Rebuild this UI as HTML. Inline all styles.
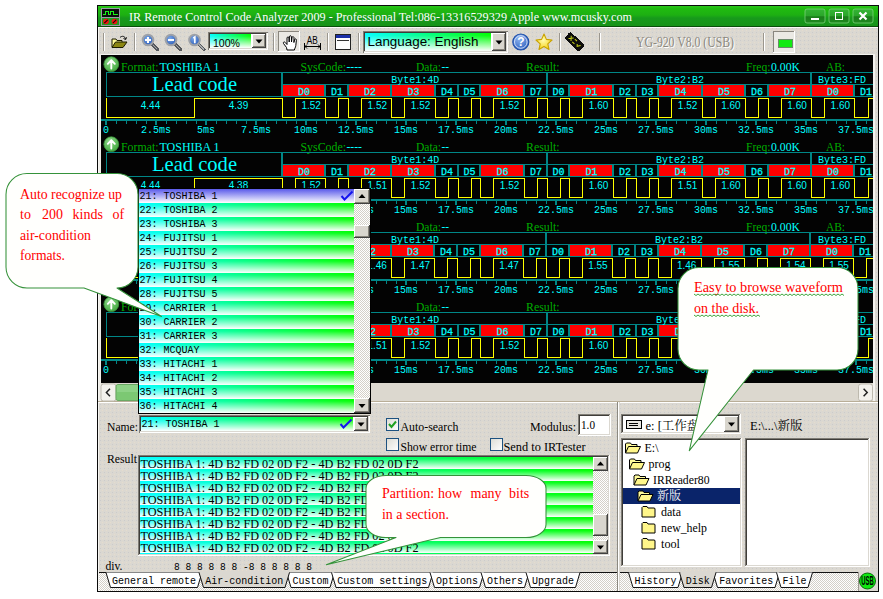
<!DOCTYPE html>
<html lang="en"><head><meta charset="utf-8"><title>IR Remote Control Code Analyzer 2009</title>
<style>
html,body{margin:0;padding:0;background:#ffffff;}
body{width:883px;height:599px;overflow:hidden;position:relative;}
svg{position:absolute;left:0;top:0;display:block;}
text{white-space:pre;}
rect,polyline,line{shape-rendering:crispEdges;}
.tt{font-family:"Liberation Serif","Noto Serif CJK SC",serif;font-size:13.5px;}
.tt14{font-family:"Liberation Serif","Noto Serif CJK SC",serif;font-size:14px;}
.hd{font-family:"Liberation Serif","Noto Serif CJK SC",serif;font-size:13.5px;}
.lead{font-family:"Liberation Serif","Noto Serif CJK SC",serif;font-size:22px;}
.co{font-family:"Liberation Serif","Noto Serif CJK SC",serif;font-size:14px;}
.cj{font-family:"Liberation Serif","Noto Serif CJK SC",serif;font-size:12.5px;}
.m12{font-family:"Liberation Mono","Noto Sans CJK SC",monospace;font-size:11.5px;}
.br{stroke:#00ffff;stroke-width:0.3px;}
.a10{font-family:"Liberation Sans","Noto Sans CJK SC",sans-serif;font-size:10px;}
.a9{font-family:"Liberation Sans","Noto Sans CJK SC",sans-serif;font-size:10px;}
.a12{font-family:"Liberation Sans","Noto Sans CJK SC",sans-serif;font-size:11.5px;}
.a14{font-family:"Liberation Sans","Noto Sans CJK SC",sans-serif;font-size:13.5px;}
.ab12{font-family:"Liberation Sans","Noto Sans CJK SC",sans-serif;font-size:12px;font-weight:bold;}
.usb{font-family:"Liberation Sans","Noto Sans CJK SC",sans-serif;font-size:12px;font-weight:bold;}
</style></head>
<body>
<svg width="883" height="599" viewBox="0 0 883 599">
<defs>
<linearGradient id="gTitle" x1="0" y1="0" x2="0" y2="1"><stop offset="0" stop-color="#2bc81a"/><stop offset="0.12" stop-color="#20bb10"/><stop offset="0.45" stop-color="#1db012"/><stop offset="0.6" stop-color="#179a1c"/><stop offset="1" stop-color="#169318"/></linearGradient>
<linearGradient id="gBtn" x1="0" y1="0" x2="0" y2="1"><stop offset="0" stop-color="#35b535"/><stop offset="0.5" stop-color="#2aa52a"/><stop offset="0.55" stop-color="#1a7d1a"/><stop offset="1" stop-color="#1f8a1f"/></linearGradient>
<linearGradient id="gH" x1="0" y1="0" x2="1" y2="0"><stop offset="0" stop-color="#00ffff"/><stop offset="1" stop-color="#00ff00"/></linearGradient>
<linearGradient id="gV" x1="0" y1="0" x2="0" y2="1"><stop offset="0" stop-color="#ffffff" stop-opacity="0"/><stop offset="0.15" stop-color="#ffffff" stop-opacity="0.05"/><stop offset="1" stop-color="#ffffff" stop-opacity="1"/></linearGradient>
<linearGradient id="gSel" x1="0" y1="0" x2="0" y2="1"><stop offset="0" stop-color="#5a5aea"/><stop offset="1" stop-color="#ffffff"/></linearGradient>
<linearGradient id="gChk" x1="0" y1="0" x2="1" y2="1"><stop offset="0" stop-color="#dcdcd4"/><stop offset="1" stop-color="#ffffff"/></linearGradient>
<radialGradient id="gLens" cx="0.4" cy="0.35" r="0.7"><stop offset="0" stop-color="#7aa6e6"/><stop offset="1" stop-color="#2a5cb8"/></radialGradient>
<radialGradient id="gHelp" cx="0.4" cy="0.3" r="0.8"><stop offset="0" stop-color="#8db4f0"/><stop offset="1" stop-color="#2457b8"/></radialGradient>
<radialGradient id="gStar" cx="0.45" cy="0.4" r="0.6"><stop offset="0" stop-color="#fffbb0"/><stop offset="1" stop-color="#f7d51a"/></radialGradient>
<radialGradient id="gUp" cx="0.4" cy="0.3" r="0.8"><stop offset="0" stop-color="#8ed88a"/><stop offset="1" stop-color="#3da63a"/></radialGradient>
<pattern id="pPanel" width="4" height="4" patternUnits="userSpaceOnUse"><rect width="4" height="4" fill="#dbd8d1"/><rect width="1" height="1" fill="#cbcbcc"/><rect x="2" y="2" width="1" height="1" fill="#e6dccd"/></pattern>
<pattern id="pDither" width="2" height="2" patternUnits="userSpaceOnUse"><rect width="2" height="2" fill="#ffffff"/><rect width="1" height="1" fill="#d4d0c8"/><rect x="1" y="1" width="1" height="1" fill="#d4d0c8"/></pattern>
<clipPath id="cpWave"><rect x="101" y="55" width="772" height="328"/></clipPath>
<clipPath id="cpRes"><rect x="140" y="457" width="453" height="97"/></clipPath>
</defs>
<rect x="97" y="5" width="782" height="587" fill="#0b0b0b" />
<rect x="98" y="6" width="780" height="585" fill="url(#pPanel)" />
<rect x="98" y="27" width="1" height="564" fill="#f6f5f1" />
<rect x="98" y="6" width="780" height="20" fill="url(#gTitle)" />
<rect x="98" y="26" width="780" height="1" fill="#0b4d0b" />
<rect x="98" y="27" width="780" height="1" fill="#fbfaf8" />
<rect x="101" y="8" width="19" height="18" fill="#9a9aa6" />
<rect x="102" y="9" width="17" height="8" fill="#0c0c0c" />
<rect x="102" y="18" width="17" height="7" fill="#1f9a1f" />
<polyline points="103,14.5 105.5,14.5 105.5,11.5 108.5,11.5 108.5,14.5 110.5,14.5 110.5,11.5 113.5,11.5 113.5,14.5 118,14.5" fill="none" stroke="#19f019" stroke-width="1.3"/>
<circle cx="106" cy="21.5" r="2.8" fill="#f01414"/><circle cx="114.5" cy="21.5" r="2.8" fill="#f01414"/>
<line x1="104.3" y1="23.2" x2="107.7" y2="19.8" stroke="#200" stroke-width="1.1" style="shape-rendering:auto"/>
<line x1="112.8" y1="23.2" x2="116.2" y2="19.8" stroke="#200" stroke-width="1.1" style="shape-rendering:auto"/>
<text x="129" y="21" class="tt" fill="#ffffff" textLength="503" lengthAdjust="spacingAndGlyphs" >IR Remote Control Code Analyzer 2009 - Professional Tel:086-13316529329 Apple www.mcusky.com</text>
<rect x="805" y="9" width="20" height="14" fill="url(#gBtn)" rx="2" stroke="#7fd47f" stroke-opacity="0.75" stroke-width="1" style="shape-rendering:auto"/>
<rect x="829" y="9" width="20" height="14" fill="url(#gBtn)" rx="2" stroke="#7fd47f" stroke-opacity="0.75" stroke-width="1" style="shape-rendering:auto"/>
<rect x="853" y="9" width="20" height="14" fill="url(#gBtn)" rx="2" stroke="#7fd47f" stroke-opacity="0.75" stroke-width="1" style="shape-rendering:auto"/>
<rect x="811" y="18" width="8" height="2" fill="#ffffff" />
<rect x="835.5" y="12.5" width="7" height="7" fill="none" stroke="#fff" stroke-width="1.6"/>
<path d="M859.5 12.5 L866.5 19.5 M866.5 12.5 L859.5 19.5" stroke="#fff" stroke-width="2.2" fill="none"/>
<rect x="103" y="33" width="1" height="18" fill="#9a968e" />
<rect x="104" y="33" width="1" height="18" fill="#ffffff" />
<rect x="134" y="33" width="1" height="18" fill="#9a968e" />
<rect x="135" y="33" width="1" height="18" fill="#ffffff" />
<rect x="273" y="33" width="1" height="18" fill="#9a968e" />
<rect x="274" y="33" width="1" height="18" fill="#ffffff" />
<rect x="327" y="33" width="1" height="18" fill="#9a968e" />
<rect x="328" y="33" width="1" height="18" fill="#ffffff" />
<rect x="358" y="33" width="1" height="18" fill="#9a968e" />
<rect x="359" y="33" width="1" height="18" fill="#ffffff" />
<rect x="559" y="33" width="1" height="18" fill="#9a968e" />
<rect x="560" y="33" width="1" height="18" fill="#ffffff" />
<rect x="599" y="33" width="1" height="18" fill="#9a968e" />
<rect x="600" y="33" width="1" height="18" fill="#ffffff" />
<rect x="763" y="33" width="1" height="18" fill="#9a968e" />
<rect x="764" y="33" width="1" height="18" fill="#ffffff" />
<g transform="translate(111,35)"><path d="M1 12 L1 4 L5 4 L6 5.5 L11 5.5 L11 7" fill="#fffb9a" stroke="#1a1a00" stroke-width="1"/><path d="M1 12.5 L4.5 7 L16 7 L12 12.5 Z" fill="#8b8612" stroke="#1a1a00" stroke-width="1"/><path d="M9 2.5 C11 0.5 14 1 14.5 4 M12.5 3.5 L14.7 4.6 L15.6 2.3" fill="none" stroke="#111" stroke-width="1"/></g>
<g><line x1="152" y1="44" x2="157.5" y2="49.5" stroke="#55585c" stroke-width="3.2" stroke-linecap="round"/><line x1="153" y1="45" x2="157" y2="49" stroke="#a6a9ad" stroke-width="1.2" stroke-linecap="round"/><circle cx="148" cy="40" r="5.3" fill="url(#gLens)" stroke="#9da1a8" stroke-width="2"/>
<path d="M145 40 H151 M148 37 V43" stroke="#fff" stroke-width="2"/>
</g>
<g><line x1="175" y1="44" x2="180.5" y2="49.5" stroke="#55585c" stroke-width="3.2" stroke-linecap="round"/><line x1="176" y1="45" x2="180" y2="49" stroke="#a6a9ad" stroke-width="1.2" stroke-linecap="round"/><circle cx="171" cy="40" r="5.3" fill="url(#gLens)" stroke="#9da1a8" stroke-width="2"/>
<path d="M168 40 H174" stroke="#fff" stroke-width="2"/>
</g>
<g><line x1="198.5" y1="44" x2="204.0" y2="49.5" stroke="#55585c" stroke-width="3.2" stroke-linecap="round"/><line x1="199.5" y1="45" x2="203.5" y2="49" stroke="#a6a9ad" stroke-width="1.2" stroke-linecap="round"/><circle cx="194.5" cy="40" r="5.3" fill="url(#gLens)" stroke="#9da1a8" stroke-width="2"/>
<path d="M193.3 38 L194.8 37 V43.2" stroke="#fff" stroke-width="1.7" fill="none"/>
</g>
<rect x="208" y="32" width="60" height="18" fill="#ffffff" />
<rect x="208" y="32" width="60" height="1" fill="#7f7c75" />
<rect x="208" y="32" width="1" height="18" fill="#7f7c75" />
<rect x="209" y="33" width="58" height="1" fill="#3f3d39" />
<rect x="209" y="33" width="1" height="16" fill="#3f3d39" />
<rect x="209" y="48" width="58" height="1" fill="#dbd8d1" />
<rect x="266" y="33" width="1" height="16" fill="#dbd8d1" />
<rect x="210" y="34" width="41" height="14" fill="url(#gH)" />
<rect x="210" y="34" width="41" height="14" fill="url(#gV)" />
<rect x="252" y="34" width="14" height="14" fill="#d9d6ce" />
<rect x="252" y="34" width="14" height="1" fill="#ffffff" />
<rect x="252" y="34" width="1" height="14" fill="#ffffff" />
<rect x="252" y="47" width="14" height="1" fill="#404040" />
<rect x="265" y="34" width="1" height="14" fill="#404040" />
<rect x="253" y="46" width="12" height="1" fill="#858279" />
<rect x="264" y="35" width="1" height="12" fill="#858279" />
<path d="M255.5 39.5 L262.5 39.5 L259 43.5 Z" fill="#000"/>
<text x="213" y="47" class="a12" fill="#000" textLength="27" lengthAdjust="spacingAndGlyphs" >100%</text>
<rect x="278" y="31" width="22" height="21" fill="#ebe9e4" />
<rect x="278" y="31" width="22" height="1" fill="#8a867e" />
<rect x="278" y="31" width="1" height="21" fill="#8a867e" />
<rect x="278" y="51" width="22" height="1" fill="#fff" />
<rect x="299" y="31" width="1" height="21" fill="#fff" />
<g transform="translate(282,35)"><path d="M5 15 L4.5 12.5 L1.5 8.5 C0.8 7.3 2.3 6.3 3.3 7.5 L5 9.5 L5 3 C5 1.6 7 1.6 7 3 L7.2 7 L7.4 1.8 C7.4 0.4 9.4 0.4 9.4 1.8 L9.5 7 L10 2.6 C10.1 1.2 12 1.4 12 2.8 L11.9 7.5 L12.6 4.6 C13 3.4 14.6 3.8 14.4 5.2 L13.8 10.5 C13.6 12.5 12.6 13.4 12.4 15 Z" fill="#fff" stroke="#000" stroke-width="1"/></g>
<text x="306.8" y="44.3" class="a9" fill="#000" textLength="11" lengthAdjust="spacingAndGlyphs" >AB</text>
<path d="M304.5 43 V50 M320.5 43 V50 M304.5 46.5 H320.5 M307 44.5 L305 46.5 L307 48.5 M318 44.5 L320 46.5 L318 48.5" stroke="#000" stroke-width="1" fill="none"/>
<rect x="335.5" y="34.5" width="15" height="14.5" fill="#fdfdfd" stroke="#222" stroke-width="1"/>
<rect x="336" y="35" width="14" height="3" fill="#1b2fa8" />
<rect x="337" y="40" width="12" height="1" fill="#333" />
<rect x="363" y="31" width="145" height="22" fill="#ffffff" />
<rect x="363" y="31" width="145" height="1" fill="#7f7c75" />
<rect x="363" y="31" width="1" height="22" fill="#7f7c75" />
<rect x="364" y="32" width="143" height="1" fill="#3f3d39" />
<rect x="364" y="32" width="1" height="20" fill="#3f3d39" />
<rect x="364" y="51" width="143" height="1" fill="#dbd8d1" />
<rect x="506" y="32" width="1" height="20" fill="#dbd8d1" />
<rect x="365" y="33" width="126" height="18" fill="url(#gH)" />
<rect x="365" y="33" width="126" height="18" fill="url(#gV)" />
<rect x="492" y="33" width="14" height="18" fill="#d9d6ce" />
<rect x="492" y="33" width="14" height="1" fill="#ffffff" />
<rect x="492" y="33" width="1" height="18" fill="#ffffff" />
<rect x="492" y="50" width="14" height="1" fill="#404040" />
<rect x="505" y="33" width="1" height="18" fill="#404040" />
<rect x="493" y="49" width="12" height="1" fill="#858279" />
<rect x="504" y="34" width="1" height="16" fill="#858279" />
<path d="M495.5 40.5 L502.5 40.5 L499 44.5 Z" fill="#000"/>
<text x="367.5" y="45.5" class="a14" fill="#000" textLength="111" lengthAdjust="spacingAndGlyphs" >Language: English</text>
<circle cx="520.8" cy="42" r="8" fill="url(#gHelp)" stroke="#1f4fa8" stroke-width="1.2"/><circle cx="520.8" cy="42" r="6.3" fill="none" stroke="#dfe9fb" stroke-width="0.9"/>
<text x="520.8" y="46.2" class="ab12" fill="#fff" text-anchor="middle" >?</text>
<path d="M544 34 L546.4 39.4 L552 40 L547.8 43.8 L549 49.4 L544 46.5 L539 49.4 L540.2 43.8 L536 40 L541.6 39.4 Z" fill="url(#gStar)" stroke="#c9a200" stroke-width="1.1" stroke-linejoin="round"/>
<g transform="rotate(43 574.5 41.7)"><rect x="564.5" y="37.2" width="20" height="9" rx="2" fill="#0c0c0c"/><path d="M568 39.5 l3.4 4 M571.4 39.5 l-3.4 4 M573 39.6 h3 M573 43.4 h3 M578 41.5 l1.6 1.8 l2 -3" stroke="#c7d11a" stroke-width="1" fill="none"/></g>
<text x="637" y="48" class="tt14" fill="#ffffff" textLength="98" lengthAdjust="spacingAndGlyphs" >YG-920 V8.0 (USB)</text>
<text x="636" y="47" class="tt14" fill="#8b887f" textLength="98" lengthAdjust="spacingAndGlyphs" >YG-920 V8.0 (USB)</text>
<rect x="773" y="31" width="22" height="22" fill="#ebe9e4" />
<rect x="773" y="31" width="22" height="1" fill="#8a867e" />
<rect x="773" y="31" width="1" height="22" fill="#8a867e" />
<rect x="773" y="52" width="22" height="1" fill="#fff" />
<rect x="794" y="31" width="1" height="22" fill="#fff" />
<rect x="778" y="39" width="14" height="8" fill="#12ea12" stroke="#6a8a6a" stroke-width="1"/>
<rect x="873" y="54" width="2" height="347" fill="#f4f3ef" />
<rect x="99" y="54" width="776" height="1" fill="#f4f3ef" />
<rect x="99" y="54" width="2" height="347" fill="#eeece7" />
<rect x="101" y="55" width="772" height="328" fill="#030303" />
<g clip-path="url(#cpWave)">
<circle cx="111.3" cy="64.2" r="7.4" fill="url(#gUp)" stroke="#3c9a3c" stroke-width="0.8"/>
<path d="M111.3 68.6 V60.6 M107.8 63.8 L111.3 60.2 L114.8 63.8" stroke="#fff" stroke-width="1.9" fill="none" stroke-linecap="round" stroke-linejoin="round"/>
<text x="121" y="71" class="hd" fill="#00ad00" textLength="37.5" lengthAdjust="spacingAndGlyphs" >Format:</text>
<text x="159.5" y="71" class="hd" fill="#00ffff" textLength="60" lengthAdjust="spacingAndGlyphs" >TOSHIBA 1</text>
<text x="300.5" y="71" class="hd" fill="#00ad00" textLength="45.5" lengthAdjust="spacingAndGlyphs" >SysCode:</text>
<text x="346.5" y="71" class="hd" fill="#00ffff" textLength="15.5" lengthAdjust="spacingAndGlyphs" >----</text>
<text x="416" y="71" class="hd" fill="#00ad00" textLength="25" lengthAdjust="spacingAndGlyphs" >Data:</text>
<text x="441.5" y="71" class="hd" fill="#00ffff" textLength="7.5" lengthAdjust="spacingAndGlyphs" >--</text>
<text x="526" y="71" class="hd" fill="#00ad00" textLength="33.5" lengthAdjust="spacingAndGlyphs" >Result:</text>
<text x="746" y="71" class="hd" fill="#00ad00" textLength="24.5" lengthAdjust="spacingAndGlyphs" >Freq:</text>
<text x="771" y="71" class="hd" fill="#00ffff" textLength="29" lengthAdjust="spacingAndGlyphs" >0.00K</text>
<text x="826" y="71" class="hd" fill="#00ad00" textLength="19" lengthAdjust="spacingAndGlyphs" >AB:</text>
<rect x="106" y="72" width="767" height="1" fill="#008686" />
<rect x="106" y="96" width="767" height="1" fill="#008686" />
<rect x="106" y="72" width="1" height="25" fill="#008686" />
<rect x="281" y="72" width="2" height="25" fill="#008686" />
<rect x="283" y="84" width="590" height="1" fill="#008686" />
<text x="194.5" y="91" class="lead" fill="#00ffff" textLength="85" lengthAdjust="spacingAndGlyphs" text-anchor="middle" >Lead code</text>
<rect x="283" y="85" width="41" height="11" fill="#ff0000" />
<rect x="324" y="85" width="2" height="11" fill="#008686" />
<text x="304" y="95" class="m12 br" fill="#00ffff" textLength="12" lengthAdjust="spacingAndGlyphs" text-anchor="middle" >D0</text>
<rect x="347" y="85" width="2" height="11" fill="#008686" />
<text x="337" y="95" class="m12 br" fill="#00ffff" textLength="12" lengthAdjust="spacingAndGlyphs" text-anchor="middle" >D1</text>
<rect x="349" y="85" width="41" height="11" fill="#ff0000" />
<rect x="390" y="85" width="2" height="11" fill="#008686" />
<text x="370" y="95" class="m12 br" fill="#00ffff" textLength="12" lengthAdjust="spacingAndGlyphs" text-anchor="middle" >D2</text>
<rect x="392" y="85" width="42" height="11" fill="#ff0000" />
<rect x="434" y="85" width="2" height="11" fill="#008686" />
<text x="413.5" y="95" class="m12 br" fill="#00ffff" textLength="12" lengthAdjust="spacingAndGlyphs" text-anchor="middle" >D3</text>
<rect x="457" y="85" width="2" height="11" fill="#008686" />
<text x="447" y="95" class="m12 br" fill="#00ffff" textLength="12" lengthAdjust="spacingAndGlyphs" text-anchor="middle" >D4</text>
<rect x="479" y="85" width="2" height="11" fill="#008686" />
<text x="469.5" y="95" class="m12 br" fill="#00ffff" textLength="12" lengthAdjust="spacingAndGlyphs" text-anchor="middle" >D5</text>
<rect x="481" y="85" width="42" height="11" fill="#ff0000" />
<rect x="523" y="85" width="2" height="11" fill="#008686" />
<text x="502.5" y="95" class="m12 br" fill="#00ffff" textLength="12" lengthAdjust="spacingAndGlyphs" text-anchor="middle" >D6</text>
<rect x="546" y="85" width="2" height="11" fill="#008686" />
<text x="536" y="95" class="m12 br" fill="#00ffff" textLength="12" lengthAdjust="spacingAndGlyphs" text-anchor="middle" >D7</text>
<rect x="546" y="72" width="2" height="25" fill="#008686" />
<text x="415.3" y="83" class="m12" fill="#00ffff" textLength="48" lengthAdjust="spacingAndGlyphs" text-anchor="middle" >Byte1:4D</text>
<rect x="568" y="85" width="2" height="11" fill="#008686" />
<text x="558.5" y="95" class="m12 br" fill="#00ffff" textLength="12" lengthAdjust="spacingAndGlyphs" text-anchor="middle" >D0</text>
<rect x="570" y="85" width="42" height="11" fill="#ff0000" />
<rect x="612" y="85" width="2" height="11" fill="#008686" />
<text x="591.5" y="95" class="m12 br" fill="#00ffff" textLength="12" lengthAdjust="spacingAndGlyphs" text-anchor="middle" >D1</text>
<rect x="635" y="85" width="2" height="11" fill="#008686" />
<text x="625" y="95" class="m12 br" fill="#00ffff" textLength="12" lengthAdjust="spacingAndGlyphs" text-anchor="middle" >D2</text>
<rect x="657" y="85" width="2" height="11" fill="#008686" />
<text x="647.5" y="95" class="m12 br" fill="#00ffff" textLength="12" lengthAdjust="spacingAndGlyphs" text-anchor="middle" >D3</text>
<rect x="659" y="85" width="42" height="11" fill="#ff0000" />
<rect x="701" y="85" width="2" height="11" fill="#008686" />
<text x="680.5" y="95" class="m12 br" fill="#00ffff" textLength="12" lengthAdjust="spacingAndGlyphs" text-anchor="middle" >D4</text>
<rect x="703" y="85" width="41" height="11" fill="#ff0000" />
<rect x="744" y="85" width="2" height="11" fill="#008686" />
<text x="724" y="95" class="m12 br" fill="#00ffff" textLength="12" lengthAdjust="spacingAndGlyphs" text-anchor="middle" >D5</text>
<rect x="767" y="85" width="2" height="11" fill="#008686" />
<text x="757" y="95" class="m12 br" fill="#00ffff" textLength="12" lengthAdjust="spacingAndGlyphs" text-anchor="middle" >D6</text>
<rect x="769" y="85" width="41" height="11" fill="#ff0000" />
<rect x="810" y="85" width="2" height="11" fill="#008686" />
<text x="790" y="95" class="m12 br" fill="#00ffff" textLength="12" lengthAdjust="spacingAndGlyphs" text-anchor="middle" >D7</text>
<rect x="810" y="72" width="2" height="25" fill="#008686" />
<text x="679.9" y="83" class="m12" fill="#00ffff" textLength="48" lengthAdjust="spacingAndGlyphs" text-anchor="middle" >Byte2:B2</text>
<rect x="812" y="85" width="41" height="11" fill="#ff0000" />
<rect x="853" y="85" width="2" height="11" fill="#008686" />
<text x="833" y="95" class="m12 br" fill="#00ffff" textLength="12" lengthAdjust="spacingAndGlyphs" text-anchor="middle" >D0</text>
<rect x="876" y="85" width="2" height="11" fill="#008686" />
<text x="866" y="95" class="m12 br" fill="#00ffff" textLength="12" lengthAdjust="spacingAndGlyphs" text-anchor="middle" >D1</text>
<rect x="878" y="85" width="42" height="11" fill="#ff0000" />
<rect x="920" y="85" width="2" height="11" fill="#008686" />
<text x="899.5" y="95" class="m12 br" fill="#00ffff" textLength="12" lengthAdjust="spacingAndGlyphs" text-anchor="middle" >D2</text>
<rect x="920" y="72" width="2" height="25" fill="#008686" />
<text x="818" y="83" class="m12" fill="#00ffff" textLength="48" lengthAdjust="spacingAndGlyphs" >Byte3:FD</text>
<polyline points="106.5,98 106.5,117.5 194.5,117.5 194.5,98.5 282.5,98.5 282.5,117.5 295.5,117.5 295.5,98.5 325.5,98.5 325.5,117.5 338.5,117.5 338.5,98.5 348.5,98.5 348.5,117.5 361.5,117.5 361.5,98.5 391.5,98.5 391.5,117.5 404.5,117.5 404.5,98.5 435.5,98.5 435.5,117.5 448.5,117.5 448.5,98.5 458.5,98.5 458.5,117.5 471.5,117.5 471.5,98.5 480.5,98.5 480.5,117.5 493.5,117.5 493.5,98.5 524.5,98.5 524.5,117.5 537.5,117.5 537.5,98.5 547.5,98.5 547.5,117.5 560.5,117.5 560.5,98.5 569.5,98.5 569.5,117.5 582.5,117.5 582.5,98.5 613.5,98.5 613.5,117.5 626.5,117.5 626.5,98.5 636.5,98.5 636.5,117.5 649.5,117.5 649.5,98.5 658.5,98.5 658.5,117.5 671.5,117.5 671.5,98.5 702.5,98.5 702.5,117.5 715.5,117.5 715.5,98.5 745.5,98.5 745.5,117.5 758.5,117.5 758.5,98.5 768.5,98.5 768.5,117.5 781.5,117.5 781.5,98.5 811.5,98.5 811.5,117.5 824.5,117.5 824.5,98.5 854.5,98.5 854.5,117.5 868.5,117.5 868.5,98.5 877.5,98.5 877.5,117.5 890.5,117.5 890.5,98.5 921.5,98.5" fill="none" stroke="#ffff00" stroke-width="1"/>
<text x="150.5" y="109" class="a10" fill="#00ffff" text-anchor="middle" >4.44</text>
<text x="238.5" y="109" class="a10" fill="#00ffff" text-anchor="middle" >4.39</text>
<text x="311.15" y="109" class="a10" fill="#00ffff" text-anchor="middle" >1.52</text>
<text x="377.3" y="109" class="a10" fill="#00ffff" text-anchor="middle" >1.52</text>
<text x="420.6" y="109" class="a10" fill="#00ffff" text-anchor="middle" >1.52</text>
<text x="509.6" y="109" class="a10" fill="#00ffff" text-anchor="middle" >1.52</text>
<text x="598.6" y="109" class="a10" fill="#00ffff" text-anchor="middle" >1.60</text>
<text x="687.6" y="109" class="a10" fill="#00ffff" text-anchor="middle" >1.52</text>
<text x="730.9" y="109" class="a10" fill="#00ffff" text-anchor="middle" >1.60</text>
<text x="797.05" y="109" class="a10" fill="#00ffff" text-anchor="middle" >1.60</text>
<text x="840.35" y="109" class="a10" fill="#00ffff" text-anchor="middle" >1.60</text>
<rect x="101" y="119" width="772" height="2" fill="#008686" />
<rect x="105" y="121" width="2" height="4" fill="#008686" />
<rect x="116" y="121" width="1" height="3" fill="#008686" />
<rect x="126" y="121" width="1" height="3" fill="#008686" />
<rect x="136" y="121" width="1" height="3" fill="#008686" />
<rect x="146" y="121" width="1" height="3" fill="#008686" />
<rect x="155" y="121" width="2" height="4" fill="#008686" />
<rect x="166" y="121" width="1" height="3" fill="#008686" />
<rect x="176" y="121" width="1" height="3" fill="#008686" />
<rect x="186" y="121" width="1" height="3" fill="#008686" />
<rect x="196" y="121" width="1" height="3" fill="#008686" />
<rect x="205" y="121" width="2" height="4" fill="#008686" />
<rect x="216" y="121" width="1" height="3" fill="#008686" />
<rect x="226" y="121" width="1" height="3" fill="#008686" />
<rect x="236" y="121" width="1" height="3" fill="#008686" />
<rect x="246" y="121" width="1" height="3" fill="#008686" />
<rect x="255" y="121" width="2" height="4" fill="#008686" />
<rect x="266" y="121" width="1" height="3" fill="#008686" />
<rect x="276" y="121" width="1" height="3" fill="#008686" />
<rect x="286" y="121" width="1" height="3" fill="#008686" />
<rect x="296" y="121" width="1" height="3" fill="#008686" />
<rect x="305" y="121" width="2" height="4" fill="#008686" />
<rect x="316" y="121" width="1" height="3" fill="#008686" />
<rect x="326" y="121" width="1" height="3" fill="#008686" />
<rect x="336" y="121" width="1" height="3" fill="#008686" />
<rect x="346" y="121" width="1" height="3" fill="#008686" />
<rect x="355" y="121" width="2" height="4" fill="#008686" />
<rect x="366" y="121" width="1" height="3" fill="#008686" />
<rect x="376" y="121" width="1" height="3" fill="#008686" />
<rect x="386" y="121" width="1" height="3" fill="#008686" />
<rect x="396" y="121" width="1" height="3" fill="#008686" />
<rect x="405" y="121" width="2" height="4" fill="#008686" />
<rect x="416" y="121" width="1" height="3" fill="#008686" />
<rect x="426" y="121" width="1" height="3" fill="#008686" />
<rect x="436" y="121" width="1" height="3" fill="#008686" />
<rect x="446" y="121" width="1" height="3" fill="#008686" />
<rect x="455" y="121" width="2" height="4" fill="#008686" />
<rect x="466" y="121" width="1" height="3" fill="#008686" />
<rect x="476" y="121" width="1" height="3" fill="#008686" />
<rect x="486" y="121" width="1" height="3" fill="#008686" />
<rect x="496" y="121" width="1" height="3" fill="#008686" />
<rect x="505" y="121" width="2" height="4" fill="#008686" />
<rect x="516" y="121" width="1" height="3" fill="#008686" />
<rect x="526" y="121" width="1" height="3" fill="#008686" />
<rect x="536" y="121" width="1" height="3" fill="#008686" />
<rect x="546" y="121" width="1" height="3" fill="#008686" />
<rect x="555" y="121" width="2" height="4" fill="#008686" />
<rect x="566" y="121" width="1" height="3" fill="#008686" />
<rect x="576" y="121" width="1" height="3" fill="#008686" />
<rect x="586" y="121" width="1" height="3" fill="#008686" />
<rect x="596" y="121" width="1" height="3" fill="#008686" />
<rect x="605" y="121" width="2" height="4" fill="#008686" />
<rect x="616" y="121" width="1" height="3" fill="#008686" />
<rect x="626" y="121" width="1" height="3" fill="#008686" />
<rect x="636" y="121" width="1" height="3" fill="#008686" />
<rect x="646" y="121" width="1" height="3" fill="#008686" />
<rect x="655" y="121" width="2" height="4" fill="#008686" />
<rect x="666" y="121" width="1" height="3" fill="#008686" />
<rect x="676" y="121" width="1" height="3" fill="#008686" />
<rect x="686" y="121" width="1" height="3" fill="#008686" />
<rect x="696" y="121" width="1" height="3" fill="#008686" />
<rect x="705" y="121" width="2" height="4" fill="#008686" />
<rect x="716" y="121" width="1" height="3" fill="#008686" />
<rect x="726" y="121" width="1" height="3" fill="#008686" />
<rect x="736" y="121" width="1" height="3" fill="#008686" />
<rect x="746" y="121" width="1" height="3" fill="#008686" />
<rect x="755" y="121" width="2" height="4" fill="#008686" />
<rect x="766" y="121" width="1" height="3" fill="#008686" />
<rect x="776" y="121" width="1" height="3" fill="#008686" />
<rect x="786" y="121" width="1" height="3" fill="#008686" />
<rect x="796" y="121" width="1" height="3" fill="#008686" />
<rect x="805" y="121" width="2" height="4" fill="#008686" />
<rect x="816" y="121" width="1" height="3" fill="#008686" />
<rect x="826" y="121" width="1" height="3" fill="#008686" />
<rect x="836" y="121" width="1" height="3" fill="#008686" />
<rect x="846" y="121" width="1" height="3" fill="#008686" />
<rect x="855" y="121" width="2" height="4" fill="#008686" />
<rect x="866" y="121" width="1" height="3" fill="#008686" />
<text x="106" y="133" class="m12" fill="#00ffff" textLength="6" lengthAdjust="spacingAndGlyphs" text-anchor="middle" >0</text>
<text x="156" y="133" class="m12" fill="#00ffff" textLength="30" lengthAdjust="spacingAndGlyphs" text-anchor="middle" >2.5ms</text>
<text x="206" y="133" class="m12" fill="#00ffff" textLength="18" lengthAdjust="spacingAndGlyphs" text-anchor="middle" >5ms</text>
<text x="256" y="133" class="m12" fill="#00ffff" textLength="30" lengthAdjust="spacingAndGlyphs" text-anchor="middle" >7.5ms</text>
<text x="306" y="133" class="m12" fill="#00ffff" textLength="24" lengthAdjust="spacingAndGlyphs" text-anchor="middle" >10ms</text>
<text x="356" y="133" class="m12" fill="#00ffff" textLength="36" lengthAdjust="spacingAndGlyphs" text-anchor="middle" >12.5ms</text>
<text x="406" y="133" class="m12" fill="#00ffff" textLength="24" lengthAdjust="spacingAndGlyphs" text-anchor="middle" >15ms</text>
<text x="456" y="133" class="m12" fill="#00ffff" textLength="36" lengthAdjust="spacingAndGlyphs" text-anchor="middle" >17.5ms</text>
<text x="506" y="133" class="m12" fill="#00ffff" textLength="24" lengthAdjust="spacingAndGlyphs" text-anchor="middle" >20ms</text>
<text x="556" y="133" class="m12" fill="#00ffff" textLength="36" lengthAdjust="spacingAndGlyphs" text-anchor="middle" >22.5ms</text>
<text x="606" y="133" class="m12" fill="#00ffff" textLength="24" lengthAdjust="spacingAndGlyphs" text-anchor="middle" >25ms</text>
<text x="656" y="133" class="m12" fill="#00ffff" textLength="36" lengthAdjust="spacingAndGlyphs" text-anchor="middle" >27.5ms</text>
<text x="706" y="133" class="m12" fill="#00ffff" textLength="24" lengthAdjust="spacingAndGlyphs" text-anchor="middle" >30ms</text>
<text x="756" y="133" class="m12" fill="#00ffff" textLength="36" lengthAdjust="spacingAndGlyphs" text-anchor="middle" >32.5ms</text>
<text x="806" y="133" class="m12" fill="#00ffff" textLength="24" lengthAdjust="spacingAndGlyphs" text-anchor="middle" >35ms</text>
<text x="856" y="133" class="m12" fill="#00ffff" textLength="36" lengthAdjust="spacingAndGlyphs" text-anchor="middle" >37.5ms</text>
<circle cx="111.3" cy="144.2" r="7.4" fill="url(#gUp)" stroke="#3c9a3c" stroke-width="0.8"/>
<path d="M111.3 148.6 V140.6 M107.8 143.8 L111.3 140.2 L114.8 143.8" stroke="#fff" stroke-width="1.9" fill="none" stroke-linecap="round" stroke-linejoin="round"/>
<text x="121" y="151" class="hd" fill="#00ad00" textLength="37.5" lengthAdjust="spacingAndGlyphs" >Format:</text>
<text x="159.5" y="151" class="hd" fill="#00ffff" textLength="60" lengthAdjust="spacingAndGlyphs" >TOSHIBA 1</text>
<text x="300.5" y="151" class="hd" fill="#00ad00" textLength="45.5" lengthAdjust="spacingAndGlyphs" >SysCode:</text>
<text x="346.5" y="151" class="hd" fill="#00ffff" textLength="15.5" lengthAdjust="spacingAndGlyphs" >----</text>
<text x="416" y="151" class="hd" fill="#00ad00" textLength="25" lengthAdjust="spacingAndGlyphs" >Data:</text>
<text x="441.5" y="151" class="hd" fill="#00ffff" textLength="7.5" lengthAdjust="spacingAndGlyphs" >--</text>
<text x="526" y="151" class="hd" fill="#00ad00" textLength="33.5" lengthAdjust="spacingAndGlyphs" >Result:</text>
<text x="746" y="151" class="hd" fill="#00ad00" textLength="24.5" lengthAdjust="spacingAndGlyphs" >Freq:</text>
<text x="771" y="151" class="hd" fill="#00ffff" textLength="29" lengthAdjust="spacingAndGlyphs" >0.00K</text>
<text x="826" y="151" class="hd" fill="#00ad00" textLength="19" lengthAdjust="spacingAndGlyphs" >AB:</text>
<rect x="106" y="152" width="767" height="1" fill="#008686" />
<rect x="106" y="176" width="767" height="1" fill="#008686" />
<rect x="106" y="152" width="1" height="25" fill="#008686" />
<rect x="281" y="152" width="2" height="25" fill="#008686" />
<rect x="283" y="164" width="590" height="1" fill="#008686" />
<text x="194.5" y="171" class="lead" fill="#00ffff" textLength="85" lengthAdjust="spacingAndGlyphs" text-anchor="middle" >Lead code</text>
<rect x="283" y="165" width="41" height="11" fill="#ff0000" />
<rect x="324" y="165" width="2" height="11" fill="#008686" />
<text x="304" y="175" class="m12 br" fill="#00ffff" textLength="12" lengthAdjust="spacingAndGlyphs" text-anchor="middle" >D0</text>
<rect x="347" y="165" width="2" height="11" fill="#008686" />
<text x="337" y="175" class="m12 br" fill="#00ffff" textLength="12" lengthAdjust="spacingAndGlyphs" text-anchor="middle" >D1</text>
<rect x="349" y="165" width="41" height="11" fill="#ff0000" />
<rect x="390" y="165" width="2" height="11" fill="#008686" />
<text x="370" y="175" class="m12 br" fill="#00ffff" textLength="12" lengthAdjust="spacingAndGlyphs" text-anchor="middle" >D2</text>
<rect x="392" y="165" width="42" height="11" fill="#ff0000" />
<rect x="434" y="165" width="2" height="11" fill="#008686" />
<text x="413.5" y="175" class="m12 br" fill="#00ffff" textLength="12" lengthAdjust="spacingAndGlyphs" text-anchor="middle" >D3</text>
<rect x="457" y="165" width="2" height="11" fill="#008686" />
<text x="447" y="175" class="m12 br" fill="#00ffff" textLength="12" lengthAdjust="spacingAndGlyphs" text-anchor="middle" >D4</text>
<rect x="479" y="165" width="2" height="11" fill="#008686" />
<text x="469.5" y="175" class="m12 br" fill="#00ffff" textLength="12" lengthAdjust="spacingAndGlyphs" text-anchor="middle" >D5</text>
<rect x="481" y="165" width="42" height="11" fill="#ff0000" />
<rect x="523" y="165" width="2" height="11" fill="#008686" />
<text x="502.5" y="175" class="m12 br" fill="#00ffff" textLength="12" lengthAdjust="spacingAndGlyphs" text-anchor="middle" >D6</text>
<rect x="546" y="165" width="2" height="11" fill="#008686" />
<text x="536" y="175" class="m12 br" fill="#00ffff" textLength="12" lengthAdjust="spacingAndGlyphs" text-anchor="middle" >D7</text>
<rect x="546" y="152" width="2" height="25" fill="#008686" />
<text x="415.3" y="163" class="m12" fill="#00ffff" textLength="48" lengthAdjust="spacingAndGlyphs" text-anchor="middle" >Byte1:4D</text>
<rect x="568" y="165" width="2" height="11" fill="#008686" />
<text x="558.5" y="175" class="m12 br" fill="#00ffff" textLength="12" lengthAdjust="spacingAndGlyphs" text-anchor="middle" >D0</text>
<rect x="570" y="165" width="42" height="11" fill="#ff0000" />
<rect x="612" y="165" width="2" height="11" fill="#008686" />
<text x="591.5" y="175" class="m12 br" fill="#00ffff" textLength="12" lengthAdjust="spacingAndGlyphs" text-anchor="middle" >D1</text>
<rect x="635" y="165" width="2" height="11" fill="#008686" />
<text x="625" y="175" class="m12 br" fill="#00ffff" textLength="12" lengthAdjust="spacingAndGlyphs" text-anchor="middle" >D2</text>
<rect x="657" y="165" width="2" height="11" fill="#008686" />
<text x="647.5" y="175" class="m12 br" fill="#00ffff" textLength="12" lengthAdjust="spacingAndGlyphs" text-anchor="middle" >D3</text>
<rect x="659" y="165" width="42" height="11" fill="#ff0000" />
<rect x="701" y="165" width="2" height="11" fill="#008686" />
<text x="680.5" y="175" class="m12 br" fill="#00ffff" textLength="12" lengthAdjust="spacingAndGlyphs" text-anchor="middle" >D4</text>
<rect x="703" y="165" width="41" height="11" fill="#ff0000" />
<rect x="744" y="165" width="2" height="11" fill="#008686" />
<text x="724" y="175" class="m12 br" fill="#00ffff" textLength="12" lengthAdjust="spacingAndGlyphs" text-anchor="middle" >D5</text>
<rect x="767" y="165" width="2" height="11" fill="#008686" />
<text x="757" y="175" class="m12 br" fill="#00ffff" textLength="12" lengthAdjust="spacingAndGlyphs" text-anchor="middle" >D6</text>
<rect x="769" y="165" width="41" height="11" fill="#ff0000" />
<rect x="810" y="165" width="2" height="11" fill="#008686" />
<text x="790" y="175" class="m12 br" fill="#00ffff" textLength="12" lengthAdjust="spacingAndGlyphs" text-anchor="middle" >D7</text>
<rect x="810" y="152" width="2" height="25" fill="#008686" />
<text x="679.9" y="163" class="m12" fill="#00ffff" textLength="48" lengthAdjust="spacingAndGlyphs" text-anchor="middle" >Byte2:B2</text>
<rect x="812" y="165" width="41" height="11" fill="#ff0000" />
<rect x="853" y="165" width="2" height="11" fill="#008686" />
<text x="833" y="175" class="m12 br" fill="#00ffff" textLength="12" lengthAdjust="spacingAndGlyphs" text-anchor="middle" >D0</text>
<rect x="876" y="165" width="2" height="11" fill="#008686" />
<text x="866" y="175" class="m12 br" fill="#00ffff" textLength="12" lengthAdjust="spacingAndGlyphs" text-anchor="middle" >D1</text>
<rect x="878" y="165" width="42" height="11" fill="#ff0000" />
<rect x="920" y="165" width="2" height="11" fill="#008686" />
<text x="899.5" y="175" class="m12 br" fill="#00ffff" textLength="12" lengthAdjust="spacingAndGlyphs" text-anchor="middle" >D2</text>
<rect x="920" y="152" width="2" height="25" fill="#008686" />
<text x="818" y="163" class="m12" fill="#00ffff" textLength="48" lengthAdjust="spacingAndGlyphs" >Byte3:FD</text>
<polyline points="106.5,178 106.5,197.5 194.5,197.5 194.5,178.5 282.5,178.5 282.5,197.5 295.5,197.5 295.5,178.5 325.5,178.5 325.5,197.5 338.5,197.5 338.5,178.5 348.5,178.5 348.5,197.5 361.5,197.5 361.5,178.5 391.5,178.5 391.5,197.5 404.5,197.5 404.5,178.5 435.5,178.5 435.5,197.5 448.5,197.5 448.5,178.5 458.5,178.5 458.5,197.5 471.5,197.5 471.5,178.5 480.5,178.5 480.5,197.5 493.5,197.5 493.5,178.5 524.5,178.5 524.5,197.5 537.5,197.5 537.5,178.5 547.5,178.5 547.5,197.5 560.5,197.5 560.5,178.5 569.5,178.5 569.5,197.5 582.5,197.5 582.5,178.5 613.5,178.5 613.5,197.5 626.5,197.5 626.5,178.5 636.5,178.5 636.5,197.5 649.5,197.5 649.5,178.5 658.5,178.5 658.5,197.5 671.5,197.5 671.5,178.5 702.5,178.5 702.5,197.5 715.5,197.5 715.5,178.5 745.5,178.5 745.5,197.5 758.5,197.5 758.5,178.5 768.5,178.5 768.5,197.5 781.5,197.5 781.5,178.5 811.5,178.5 811.5,197.5 824.5,197.5 824.5,178.5 854.5,178.5 854.5,197.5 868.5,197.5 868.5,178.5 877.5,178.5 877.5,197.5 890.5,197.5 890.5,178.5 921.5,178.5" fill="none" stroke="#ffff00" stroke-width="1"/>
<text x="150.5" y="189" class="a10" fill="#00ffff" text-anchor="middle" >4.44</text>
<text x="238.5" y="189" class="a10" fill="#00ffff" text-anchor="middle" >4.38</text>
<text x="311.15" y="189" class="a10" fill="#00ffff" text-anchor="middle" >1.52</text>
<text x="377.3" y="189" class="a10" fill="#00ffff" text-anchor="middle" >1.51</text>
<text x="420.6" y="189" class="a10" fill="#00ffff" text-anchor="middle" >1.52</text>
<text x="509.6" y="189" class="a10" fill="#00ffff" text-anchor="middle" >1.52</text>
<text x="598.6" y="189" class="a10" fill="#00ffff" text-anchor="middle" >1.60</text>
<text x="687.6" y="189" class="a10" fill="#00ffff" text-anchor="middle" >1.51</text>
<text x="730.9" y="189" class="a10" fill="#00ffff" text-anchor="middle" >1.60</text>
<text x="797.05" y="189" class="a10" fill="#00ffff" text-anchor="middle" >1.60</text>
<text x="840.35" y="189" class="a10" fill="#00ffff" text-anchor="middle" >1.60</text>
<rect x="101" y="199" width="772" height="2" fill="#008686" />
<rect x="105" y="201" width="2" height="4" fill="#008686" />
<rect x="116" y="201" width="1" height="3" fill="#008686" />
<rect x="126" y="201" width="1" height="3" fill="#008686" />
<rect x="136" y="201" width="1" height="3" fill="#008686" />
<rect x="146" y="201" width="1" height="3" fill="#008686" />
<rect x="155" y="201" width="2" height="4" fill="#008686" />
<rect x="166" y="201" width="1" height="3" fill="#008686" />
<rect x="176" y="201" width="1" height="3" fill="#008686" />
<rect x="186" y="201" width="1" height="3" fill="#008686" />
<rect x="196" y="201" width="1" height="3" fill="#008686" />
<rect x="205" y="201" width="2" height="4" fill="#008686" />
<rect x="216" y="201" width="1" height="3" fill="#008686" />
<rect x="226" y="201" width="1" height="3" fill="#008686" />
<rect x="236" y="201" width="1" height="3" fill="#008686" />
<rect x="246" y="201" width="1" height="3" fill="#008686" />
<rect x="255" y="201" width="2" height="4" fill="#008686" />
<rect x="266" y="201" width="1" height="3" fill="#008686" />
<rect x="276" y="201" width="1" height="3" fill="#008686" />
<rect x="286" y="201" width="1" height="3" fill="#008686" />
<rect x="296" y="201" width="1" height="3" fill="#008686" />
<rect x="305" y="201" width="2" height="4" fill="#008686" />
<rect x="316" y="201" width="1" height="3" fill="#008686" />
<rect x="326" y="201" width="1" height="3" fill="#008686" />
<rect x="336" y="201" width="1" height="3" fill="#008686" />
<rect x="346" y="201" width="1" height="3" fill="#008686" />
<rect x="355" y="201" width="2" height="4" fill="#008686" />
<rect x="366" y="201" width="1" height="3" fill="#008686" />
<rect x="376" y="201" width="1" height="3" fill="#008686" />
<rect x="386" y="201" width="1" height="3" fill="#008686" />
<rect x="396" y="201" width="1" height="3" fill="#008686" />
<rect x="405" y="201" width="2" height="4" fill="#008686" />
<rect x="416" y="201" width="1" height="3" fill="#008686" />
<rect x="426" y="201" width="1" height="3" fill="#008686" />
<rect x="436" y="201" width="1" height="3" fill="#008686" />
<rect x="446" y="201" width="1" height="3" fill="#008686" />
<rect x="455" y="201" width="2" height="4" fill="#008686" />
<rect x="466" y="201" width="1" height="3" fill="#008686" />
<rect x="476" y="201" width="1" height="3" fill="#008686" />
<rect x="486" y="201" width="1" height="3" fill="#008686" />
<rect x="496" y="201" width="1" height="3" fill="#008686" />
<rect x="505" y="201" width="2" height="4" fill="#008686" />
<rect x="516" y="201" width="1" height="3" fill="#008686" />
<rect x="526" y="201" width="1" height="3" fill="#008686" />
<rect x="536" y="201" width="1" height="3" fill="#008686" />
<rect x="546" y="201" width="1" height="3" fill="#008686" />
<rect x="555" y="201" width="2" height="4" fill="#008686" />
<rect x="566" y="201" width="1" height="3" fill="#008686" />
<rect x="576" y="201" width="1" height="3" fill="#008686" />
<rect x="586" y="201" width="1" height="3" fill="#008686" />
<rect x="596" y="201" width="1" height="3" fill="#008686" />
<rect x="605" y="201" width="2" height="4" fill="#008686" />
<rect x="616" y="201" width="1" height="3" fill="#008686" />
<rect x="626" y="201" width="1" height="3" fill="#008686" />
<rect x="636" y="201" width="1" height="3" fill="#008686" />
<rect x="646" y="201" width="1" height="3" fill="#008686" />
<rect x="655" y="201" width="2" height="4" fill="#008686" />
<rect x="666" y="201" width="1" height="3" fill="#008686" />
<rect x="676" y="201" width="1" height="3" fill="#008686" />
<rect x="686" y="201" width="1" height="3" fill="#008686" />
<rect x="696" y="201" width="1" height="3" fill="#008686" />
<rect x="705" y="201" width="2" height="4" fill="#008686" />
<rect x="716" y="201" width="1" height="3" fill="#008686" />
<rect x="726" y="201" width="1" height="3" fill="#008686" />
<rect x="736" y="201" width="1" height="3" fill="#008686" />
<rect x="746" y="201" width="1" height="3" fill="#008686" />
<rect x="755" y="201" width="2" height="4" fill="#008686" />
<rect x="766" y="201" width="1" height="3" fill="#008686" />
<rect x="776" y="201" width="1" height="3" fill="#008686" />
<rect x="786" y="201" width="1" height="3" fill="#008686" />
<rect x="796" y="201" width="1" height="3" fill="#008686" />
<rect x="805" y="201" width="2" height="4" fill="#008686" />
<rect x="816" y="201" width="1" height="3" fill="#008686" />
<rect x="826" y="201" width="1" height="3" fill="#008686" />
<rect x="836" y="201" width="1" height="3" fill="#008686" />
<rect x="846" y="201" width="1" height="3" fill="#008686" />
<rect x="855" y="201" width="2" height="4" fill="#008686" />
<rect x="866" y="201" width="1" height="3" fill="#008686" />
<text x="106" y="213" class="m12" fill="#00ffff" textLength="6" lengthAdjust="spacingAndGlyphs" text-anchor="middle" >0</text>
<text x="156" y="213" class="m12" fill="#00ffff" textLength="30" lengthAdjust="spacingAndGlyphs" text-anchor="middle" >2.5ms</text>
<text x="206" y="213" class="m12" fill="#00ffff" textLength="18" lengthAdjust="spacingAndGlyphs" text-anchor="middle" >5ms</text>
<text x="256" y="213" class="m12" fill="#00ffff" textLength="30" lengthAdjust="spacingAndGlyphs" text-anchor="middle" >7.5ms</text>
<text x="306" y="213" class="m12" fill="#00ffff" textLength="24" lengthAdjust="spacingAndGlyphs" text-anchor="middle" >10ms</text>
<text x="356" y="213" class="m12" fill="#00ffff" textLength="36" lengthAdjust="spacingAndGlyphs" text-anchor="middle" >12.5ms</text>
<text x="406" y="213" class="m12" fill="#00ffff" textLength="24" lengthAdjust="spacingAndGlyphs" text-anchor="middle" >15ms</text>
<text x="456" y="213" class="m12" fill="#00ffff" textLength="36" lengthAdjust="spacingAndGlyphs" text-anchor="middle" >17.5ms</text>
<text x="506" y="213" class="m12" fill="#00ffff" textLength="24" lengthAdjust="spacingAndGlyphs" text-anchor="middle" >20ms</text>
<text x="556" y="213" class="m12" fill="#00ffff" textLength="36" lengthAdjust="spacingAndGlyphs" text-anchor="middle" >22.5ms</text>
<text x="606" y="213" class="m12" fill="#00ffff" textLength="24" lengthAdjust="spacingAndGlyphs" text-anchor="middle" >25ms</text>
<text x="656" y="213" class="m12" fill="#00ffff" textLength="36" lengthAdjust="spacingAndGlyphs" text-anchor="middle" >27.5ms</text>
<text x="706" y="213" class="m12" fill="#00ffff" textLength="24" lengthAdjust="spacingAndGlyphs" text-anchor="middle" >30ms</text>
<text x="756" y="213" class="m12" fill="#00ffff" textLength="36" lengthAdjust="spacingAndGlyphs" text-anchor="middle" >32.5ms</text>
<text x="806" y="213" class="m12" fill="#00ffff" textLength="24" lengthAdjust="spacingAndGlyphs" text-anchor="middle" >35ms</text>
<text x="856" y="213" class="m12" fill="#00ffff" textLength="36" lengthAdjust="spacingAndGlyphs" text-anchor="middle" >37.5ms</text>
<circle cx="111.3" cy="224.2" r="7.4" fill="url(#gUp)" stroke="#3c9a3c" stroke-width="0.8"/>
<path d="M111.3 228.6 V220.6 M107.8 223.8 L111.3 220.2 L114.8 223.8" stroke="#fff" stroke-width="1.9" fill="none" stroke-linecap="round" stroke-linejoin="round"/>
<text x="121" y="231" class="hd" fill="#00ad00" textLength="37.5" lengthAdjust="spacingAndGlyphs" >Format:</text>
<text x="159.5" y="231" class="hd" fill="#00ffff" textLength="60" lengthAdjust="spacingAndGlyphs" >TOSHIBA 1</text>
<text x="300.5" y="231" class="hd" fill="#00ad00" textLength="45.5" lengthAdjust="spacingAndGlyphs" >SysCode:</text>
<text x="346.5" y="231" class="hd" fill="#00ffff" textLength="15.5" lengthAdjust="spacingAndGlyphs" >----</text>
<text x="416" y="231" class="hd" fill="#00ad00" textLength="25" lengthAdjust="spacingAndGlyphs" >Data:</text>
<text x="441.5" y="231" class="hd" fill="#00ffff" textLength="7.5" lengthAdjust="spacingAndGlyphs" >--</text>
<text x="526" y="231" class="hd" fill="#00ad00" textLength="33.5" lengthAdjust="spacingAndGlyphs" >Result:</text>
<text x="746" y="231" class="hd" fill="#00ad00" textLength="24.5" lengthAdjust="spacingAndGlyphs" >Freq:</text>
<text x="771" y="231" class="hd" fill="#00ffff" textLength="29" lengthAdjust="spacingAndGlyphs" >0.00K</text>
<text x="826" y="231" class="hd" fill="#00ad00" textLength="19" lengthAdjust="spacingAndGlyphs" >AB:</text>
<rect x="106" y="232" width="767" height="1" fill="#008686" />
<rect x="106" y="256" width="767" height="1" fill="#008686" />
<rect x="106" y="232" width="1" height="25" fill="#008686" />
<rect x="281" y="232" width="2" height="25" fill="#008686" />
<rect x="283" y="244" width="590" height="1" fill="#008686" />
<text x="194.5" y="251" class="lead" fill="#00ffff" textLength="85" lengthAdjust="spacingAndGlyphs" text-anchor="middle" >Lead code</text>
<rect x="283" y="245" width="41" height="11" fill="#ff0000" />
<rect x="324" y="245" width="2" height="11" fill="#008686" />
<text x="304" y="255" class="m12 br" fill="#00ffff" textLength="12" lengthAdjust="spacingAndGlyphs" text-anchor="middle" >D0</text>
<rect x="347" y="245" width="2" height="11" fill="#008686" />
<text x="337" y="255" class="m12 br" fill="#00ffff" textLength="12" lengthAdjust="spacingAndGlyphs" text-anchor="middle" >D1</text>
<rect x="349" y="245" width="41" height="11" fill="#ff0000" />
<rect x="390" y="245" width="2" height="11" fill="#008686" />
<text x="370" y="255" class="m12 br" fill="#00ffff" textLength="12" lengthAdjust="spacingAndGlyphs" text-anchor="middle" >D2</text>
<rect x="392" y="245" width="41" height="11" fill="#ff0000" />
<rect x="433" y="245" width="2" height="11" fill="#008686" />
<text x="413" y="255" class="m12 br" fill="#00ffff" textLength="12" lengthAdjust="spacingAndGlyphs" text-anchor="middle" >D3</text>
<rect x="456" y="245" width="2" height="11" fill="#008686" />
<text x="446" y="255" class="m12 br" fill="#00ffff" textLength="12" lengthAdjust="spacingAndGlyphs" text-anchor="middle" >D4</text>
<rect x="479" y="245" width="2" height="11" fill="#008686" />
<text x="469" y="255" class="m12 br" fill="#00ffff" textLength="12" lengthAdjust="spacingAndGlyphs" text-anchor="middle" >D5</text>
<rect x="481" y="245" width="41" height="11" fill="#ff0000" />
<rect x="522" y="245" width="2" height="11" fill="#008686" />
<text x="502" y="255" class="m12 br" fill="#00ffff" textLength="12" lengthAdjust="spacingAndGlyphs" text-anchor="middle" >D6</text>
<rect x="545" y="245" width="2" height="11" fill="#008686" />
<text x="535" y="255" class="m12 br" fill="#00ffff" textLength="12" lengthAdjust="spacingAndGlyphs" text-anchor="middle" >D7</text>
<rect x="545" y="232" width="2" height="25" fill="#008686" />
<text x="415" y="243" class="m12" fill="#00ffff" textLength="48" lengthAdjust="spacingAndGlyphs" text-anchor="middle" >Byte1:4D</text>
<rect x="568" y="245" width="2" height="11" fill="#008686" />
<text x="558" y="255" class="m12 br" fill="#00ffff" textLength="12" lengthAdjust="spacingAndGlyphs" text-anchor="middle" >D0</text>
<rect x="570" y="245" width="41" height="11" fill="#ff0000" />
<rect x="611" y="245" width="2" height="11" fill="#008686" />
<text x="591" y="255" class="m12 br" fill="#00ffff" textLength="12" lengthAdjust="spacingAndGlyphs" text-anchor="middle" >D1</text>
<rect x="634" y="245" width="2" height="11" fill="#008686" />
<text x="624" y="255" class="m12 br" fill="#00ffff" textLength="12" lengthAdjust="spacingAndGlyphs" text-anchor="middle" >D2</text>
<rect x="657" y="245" width="2" height="11" fill="#008686" />
<text x="647" y="255" class="m12 br" fill="#00ffff" textLength="12" lengthAdjust="spacingAndGlyphs" text-anchor="middle" >D3</text>
<rect x="659" y="245" width="41" height="11" fill="#ff0000" />
<rect x="700" y="245" width="2" height="11" fill="#008686" />
<text x="680" y="255" class="m12 br" fill="#00ffff" textLength="12" lengthAdjust="spacingAndGlyphs" text-anchor="middle" >D4</text>
<rect x="702" y="245" width="41" height="11" fill="#ff0000" />
<rect x="743" y="245" width="2" height="11" fill="#008686" />
<text x="723" y="255" class="m12 br" fill="#00ffff" textLength="12" lengthAdjust="spacingAndGlyphs" text-anchor="middle" >D5</text>
<rect x="766" y="245" width="2" height="11" fill="#008686" />
<text x="756" y="255" class="m12 br" fill="#00ffff" textLength="12" lengthAdjust="spacingAndGlyphs" text-anchor="middle" >D6</text>
<rect x="768" y="245" width="41" height="11" fill="#ff0000" />
<rect x="809" y="245" width="2" height="11" fill="#008686" />
<text x="789" y="255" class="m12 br" fill="#00ffff" textLength="12" lengthAdjust="spacingAndGlyphs" text-anchor="middle" >D7</text>
<rect x="809" y="232" width="2" height="25" fill="#008686" />
<text x="679" y="243" class="m12" fill="#00ffff" textLength="48" lengthAdjust="spacingAndGlyphs" text-anchor="middle" >Byte2:B2</text>
<rect x="811" y="245" width="41" height="11" fill="#ff0000" />
<rect x="852" y="245" width="2" height="11" fill="#008686" />
<text x="832" y="255" class="m12 br" fill="#00ffff" textLength="12" lengthAdjust="spacingAndGlyphs" text-anchor="middle" >D0</text>
<rect x="875" y="245" width="2" height="11" fill="#008686" />
<text x="865" y="255" class="m12 br" fill="#00ffff" textLength="12" lengthAdjust="spacingAndGlyphs" text-anchor="middle" >D1</text>
<rect x="877" y="245" width="41" height="11" fill="#ff0000" />
<rect x="918" y="245" width="2" height="11" fill="#008686" />
<text x="898" y="255" class="m12 br" fill="#00ffff" textLength="12" lengthAdjust="spacingAndGlyphs" text-anchor="middle" >D2</text>
<rect x="918" y="232" width="2" height="25" fill="#008686" />
<text x="818" y="243" class="m12" fill="#00ffff" textLength="48" lengthAdjust="spacingAndGlyphs" >Byte3:FD</text>
<polyline points="106.5,258 106.5,277.5 194.5,277.5 194.5,258.5 282.5,258.5 282.5,277.5 295.5,277.5 295.5,258.5 325.5,258.5 325.5,277.5 338.5,277.5 338.5,258.5 348.5,258.5 348.5,277.5 361.5,277.5 361.5,258.5 391.5,258.5 391.5,277.5 404.5,277.5 404.5,258.5 434.5,258.5 434.5,277.5 447.5,277.5 447.5,258.5 457.5,258.5 457.5,277.5 470.5,277.5 470.5,258.5 480.5,258.5 480.5,277.5 493.5,277.5 493.5,258.5 523.5,258.5 523.5,277.5 536.5,277.5 536.5,258.5 546.5,258.5 546.5,277.5 559.5,277.5 559.5,258.5 569.5,258.5 569.5,277.5 582.5,277.5 582.5,258.5 612.5,258.5 612.5,277.5 625.5,277.5 625.5,258.5 635.5,258.5 635.5,277.5 648.5,277.5 648.5,258.5 658.5,258.5 658.5,277.5 671.5,277.5 671.5,258.5 701.5,258.5 701.5,277.5 714.5,277.5 714.5,258.5 744.5,258.5 744.5,277.5 757.5,277.5 757.5,258.5 767.5,258.5 767.5,277.5 780.5,277.5 780.5,258.5 810.5,258.5 810.5,277.5 823.5,277.5 823.5,258.5 853.5,258.5 853.5,277.5 866.5,277.5 866.5,258.5 876.5,258.5 876.5,277.5 889.5,277.5 889.5,258.5 919.5,258.5" fill="none" stroke="#ffff00" stroke-width="1"/>
<text x="150.5" y="269" class="a10" fill="#00ffff" text-anchor="middle" >4.44</text>
<text x="238.5" y="269" class="a10" fill="#00ffff" text-anchor="middle" >4.38</text>
<text x="311.1" y="269" class="a10" fill="#00ffff" text-anchor="middle" >1.46</text>
<text x="377.1" y="269" class="a10" fill="#00ffff" text-anchor="middle" >1.46</text>
<text x="420.3" y="269" class="a10" fill="#00ffff" text-anchor="middle" >1.47</text>
<text x="509.1" y="269" class="a10" fill="#00ffff" text-anchor="middle" >1.47</text>
<text x="597.9" y="269" class="a10" fill="#00ffff" text-anchor="middle" >1.55</text>
<text x="686.7" y="269" class="a10" fill="#00ffff" text-anchor="middle" >1.46</text>
<text x="729.9" y="269" class="a10" fill="#00ffff" text-anchor="middle" >1.55</text>
<text x="795.9" y="269" class="a10" fill="#00ffff" text-anchor="middle" >1.54</text>
<text x="839.1" y="269" class="a10" fill="#00ffff" text-anchor="middle" >1.55</text>
<rect x="101" y="279" width="772" height="2" fill="#008686" />
<rect x="105" y="281" width="2" height="4" fill="#008686" />
<rect x="116" y="281" width="1" height="3" fill="#008686" />
<rect x="126" y="281" width="1" height="3" fill="#008686" />
<rect x="136" y="281" width="1" height="3" fill="#008686" />
<rect x="146" y="281" width="1" height="3" fill="#008686" />
<rect x="155" y="281" width="2" height="4" fill="#008686" />
<rect x="166" y="281" width="1" height="3" fill="#008686" />
<rect x="176" y="281" width="1" height="3" fill="#008686" />
<rect x="186" y="281" width="1" height="3" fill="#008686" />
<rect x="196" y="281" width="1" height="3" fill="#008686" />
<rect x="205" y="281" width="2" height="4" fill="#008686" />
<rect x="216" y="281" width="1" height="3" fill="#008686" />
<rect x="226" y="281" width="1" height="3" fill="#008686" />
<rect x="236" y="281" width="1" height="3" fill="#008686" />
<rect x="246" y="281" width="1" height="3" fill="#008686" />
<rect x="255" y="281" width="2" height="4" fill="#008686" />
<rect x="266" y="281" width="1" height="3" fill="#008686" />
<rect x="276" y="281" width="1" height="3" fill="#008686" />
<rect x="286" y="281" width="1" height="3" fill="#008686" />
<rect x="296" y="281" width="1" height="3" fill="#008686" />
<rect x="305" y="281" width="2" height="4" fill="#008686" />
<rect x="316" y="281" width="1" height="3" fill="#008686" />
<rect x="326" y="281" width="1" height="3" fill="#008686" />
<rect x="336" y="281" width="1" height="3" fill="#008686" />
<rect x="346" y="281" width="1" height="3" fill="#008686" />
<rect x="355" y="281" width="2" height="4" fill="#008686" />
<rect x="366" y="281" width="1" height="3" fill="#008686" />
<rect x="376" y="281" width="1" height="3" fill="#008686" />
<rect x="386" y="281" width="1" height="3" fill="#008686" />
<rect x="396" y="281" width="1" height="3" fill="#008686" />
<rect x="405" y="281" width="2" height="4" fill="#008686" />
<rect x="416" y="281" width="1" height="3" fill="#008686" />
<rect x="426" y="281" width="1" height="3" fill="#008686" />
<rect x="436" y="281" width="1" height="3" fill="#008686" />
<rect x="446" y="281" width="1" height="3" fill="#008686" />
<rect x="455" y="281" width="2" height="4" fill="#008686" />
<rect x="466" y="281" width="1" height="3" fill="#008686" />
<rect x="476" y="281" width="1" height="3" fill="#008686" />
<rect x="486" y="281" width="1" height="3" fill="#008686" />
<rect x="496" y="281" width="1" height="3" fill="#008686" />
<rect x="505" y="281" width="2" height="4" fill="#008686" />
<rect x="516" y="281" width="1" height="3" fill="#008686" />
<rect x="526" y="281" width="1" height="3" fill="#008686" />
<rect x="536" y="281" width="1" height="3" fill="#008686" />
<rect x="546" y="281" width="1" height="3" fill="#008686" />
<rect x="555" y="281" width="2" height="4" fill="#008686" />
<rect x="566" y="281" width="1" height="3" fill="#008686" />
<rect x="576" y="281" width="1" height="3" fill="#008686" />
<rect x="586" y="281" width="1" height="3" fill="#008686" />
<rect x="596" y="281" width="1" height="3" fill="#008686" />
<rect x="605" y="281" width="2" height="4" fill="#008686" />
<rect x="616" y="281" width="1" height="3" fill="#008686" />
<rect x="626" y="281" width="1" height="3" fill="#008686" />
<rect x="636" y="281" width="1" height="3" fill="#008686" />
<rect x="646" y="281" width="1" height="3" fill="#008686" />
<rect x="655" y="281" width="2" height="4" fill="#008686" />
<rect x="666" y="281" width="1" height="3" fill="#008686" />
<rect x="676" y="281" width="1" height="3" fill="#008686" />
<rect x="686" y="281" width="1" height="3" fill="#008686" />
<rect x="696" y="281" width="1" height="3" fill="#008686" />
<rect x="705" y="281" width="2" height="4" fill="#008686" />
<rect x="716" y="281" width="1" height="3" fill="#008686" />
<rect x="726" y="281" width="1" height="3" fill="#008686" />
<rect x="736" y="281" width="1" height="3" fill="#008686" />
<rect x="746" y="281" width="1" height="3" fill="#008686" />
<rect x="755" y="281" width="2" height="4" fill="#008686" />
<rect x="766" y="281" width="1" height="3" fill="#008686" />
<rect x="776" y="281" width="1" height="3" fill="#008686" />
<rect x="786" y="281" width="1" height="3" fill="#008686" />
<rect x="796" y="281" width="1" height="3" fill="#008686" />
<rect x="805" y="281" width="2" height="4" fill="#008686" />
<rect x="816" y="281" width="1" height="3" fill="#008686" />
<rect x="826" y="281" width="1" height="3" fill="#008686" />
<rect x="836" y="281" width="1" height="3" fill="#008686" />
<rect x="846" y="281" width="1" height="3" fill="#008686" />
<rect x="855" y="281" width="2" height="4" fill="#008686" />
<rect x="866" y="281" width="1" height="3" fill="#008686" />
<text x="106" y="293" class="m12" fill="#00ffff" textLength="6" lengthAdjust="spacingAndGlyphs" text-anchor="middle" >0</text>
<text x="156" y="293" class="m12" fill="#00ffff" textLength="30" lengthAdjust="spacingAndGlyphs" text-anchor="middle" >2.5ms</text>
<text x="206" y="293" class="m12" fill="#00ffff" textLength="18" lengthAdjust="spacingAndGlyphs" text-anchor="middle" >5ms</text>
<text x="256" y="293" class="m12" fill="#00ffff" textLength="30" lengthAdjust="spacingAndGlyphs" text-anchor="middle" >7.5ms</text>
<text x="306" y="293" class="m12" fill="#00ffff" textLength="24" lengthAdjust="spacingAndGlyphs" text-anchor="middle" >10ms</text>
<text x="356" y="293" class="m12" fill="#00ffff" textLength="36" lengthAdjust="spacingAndGlyphs" text-anchor="middle" >12.5ms</text>
<text x="406" y="293" class="m12" fill="#00ffff" textLength="24" lengthAdjust="spacingAndGlyphs" text-anchor="middle" >15ms</text>
<text x="456" y="293" class="m12" fill="#00ffff" textLength="36" lengthAdjust="spacingAndGlyphs" text-anchor="middle" >17.5ms</text>
<text x="506" y="293" class="m12" fill="#00ffff" textLength="24" lengthAdjust="spacingAndGlyphs" text-anchor="middle" >20ms</text>
<text x="556" y="293" class="m12" fill="#00ffff" textLength="36" lengthAdjust="spacingAndGlyphs" text-anchor="middle" >22.5ms</text>
<text x="606" y="293" class="m12" fill="#00ffff" textLength="24" lengthAdjust="spacingAndGlyphs" text-anchor="middle" >25ms</text>
<text x="656" y="293" class="m12" fill="#00ffff" textLength="36" lengthAdjust="spacingAndGlyphs" text-anchor="middle" >27.5ms</text>
<text x="706" y="293" class="m12" fill="#00ffff" textLength="24" lengthAdjust="spacingAndGlyphs" text-anchor="middle" >30ms</text>
<text x="756" y="293" class="m12" fill="#00ffff" textLength="36" lengthAdjust="spacingAndGlyphs" text-anchor="middle" >32.5ms</text>
<text x="806" y="293" class="m12" fill="#00ffff" textLength="24" lengthAdjust="spacingAndGlyphs" text-anchor="middle" >35ms</text>
<text x="856" y="293" class="m12" fill="#00ffff" textLength="36" lengthAdjust="spacingAndGlyphs" text-anchor="middle" >37.5ms</text>
<circle cx="111.3" cy="304.2" r="7.4" fill="url(#gUp)" stroke="#3c9a3c" stroke-width="0.8"/>
<path d="M111.3 308.6 V300.6 M107.8 303.8 L111.3 300.2 L114.8 303.8" stroke="#fff" stroke-width="1.9" fill="none" stroke-linecap="round" stroke-linejoin="round"/>
<text x="121" y="311" class="hd" fill="#00ad00" textLength="37.5" lengthAdjust="spacingAndGlyphs" >Format:</text>
<text x="159.5" y="311" class="hd" fill="#00ffff" textLength="60" lengthAdjust="spacingAndGlyphs" >TOSHIBA 1</text>
<text x="300.5" y="311" class="hd" fill="#00ad00" textLength="45.5" lengthAdjust="spacingAndGlyphs" >SysCode:</text>
<text x="346.5" y="311" class="hd" fill="#00ffff" textLength="15.5" lengthAdjust="spacingAndGlyphs" >----</text>
<text x="416" y="311" class="hd" fill="#00ad00" textLength="25" lengthAdjust="spacingAndGlyphs" >Data:</text>
<text x="441.5" y="311" class="hd" fill="#00ffff" textLength="7.5" lengthAdjust="spacingAndGlyphs" >--</text>
<text x="526" y="311" class="hd" fill="#00ad00" textLength="33.5" lengthAdjust="spacingAndGlyphs" >Result:</text>
<text x="746" y="311" class="hd" fill="#00ad00" textLength="24.5" lengthAdjust="spacingAndGlyphs" >Freq:</text>
<text x="771" y="311" class="hd" fill="#00ffff" textLength="29" lengthAdjust="spacingAndGlyphs" >0.00K</text>
<text x="826" y="311" class="hd" fill="#00ad00" textLength="19" lengthAdjust="spacingAndGlyphs" >AB:</text>
<rect x="106" y="312" width="767" height="1" fill="#008686" />
<rect x="106" y="336" width="767" height="1" fill="#008686" />
<rect x="106" y="312" width="1" height="25" fill="#008686" />
<rect x="281" y="312" width="2" height="25" fill="#008686" />
<rect x="283" y="324" width="590" height="1" fill="#008686" />
<text x="194.5" y="331" class="lead" fill="#00ffff" textLength="85" lengthAdjust="spacingAndGlyphs" text-anchor="middle" >Lead code</text>
<rect x="283" y="325" width="41" height="11" fill="#ff0000" />
<rect x="324" y="325" width="2" height="11" fill="#008686" />
<text x="304" y="335" class="m12 br" fill="#00ffff" textLength="12" lengthAdjust="spacingAndGlyphs" text-anchor="middle" >D0</text>
<rect x="347" y="325" width="2" height="11" fill="#008686" />
<text x="337" y="335" class="m12 br" fill="#00ffff" textLength="12" lengthAdjust="spacingAndGlyphs" text-anchor="middle" >D1</text>
<rect x="349" y="325" width="41" height="11" fill="#ff0000" />
<rect x="390" y="325" width="2" height="11" fill="#008686" />
<text x="370" y="335" class="m12 br" fill="#00ffff" textLength="12" lengthAdjust="spacingAndGlyphs" text-anchor="middle" >D2</text>
<rect x="392" y="325" width="42" height="11" fill="#ff0000" />
<rect x="434" y="325" width="2" height="11" fill="#008686" />
<text x="413.5" y="335" class="m12 br" fill="#00ffff" textLength="12" lengthAdjust="spacingAndGlyphs" text-anchor="middle" >D3</text>
<rect x="457" y="325" width="2" height="11" fill="#008686" />
<text x="447" y="335" class="m12 br" fill="#00ffff" textLength="12" lengthAdjust="spacingAndGlyphs" text-anchor="middle" >D4</text>
<rect x="479" y="325" width="2" height="11" fill="#008686" />
<text x="469.5" y="335" class="m12 br" fill="#00ffff" textLength="12" lengthAdjust="spacingAndGlyphs" text-anchor="middle" >D5</text>
<rect x="481" y="325" width="42" height="11" fill="#ff0000" />
<rect x="523" y="325" width="2" height="11" fill="#008686" />
<text x="502.5" y="335" class="m12 br" fill="#00ffff" textLength="12" lengthAdjust="spacingAndGlyphs" text-anchor="middle" >D6</text>
<rect x="546" y="325" width="2" height="11" fill="#008686" />
<text x="536" y="335" class="m12 br" fill="#00ffff" textLength="12" lengthAdjust="spacingAndGlyphs" text-anchor="middle" >D7</text>
<rect x="546" y="312" width="2" height="25" fill="#008686" />
<text x="415.3" y="323" class="m12" fill="#00ffff" textLength="48" lengthAdjust="spacingAndGlyphs" text-anchor="middle" >Byte1:4D</text>
<rect x="568" y="325" width="2" height="11" fill="#008686" />
<text x="558.5" y="335" class="m12 br" fill="#00ffff" textLength="12" lengthAdjust="spacingAndGlyphs" text-anchor="middle" >D0</text>
<rect x="570" y="325" width="42" height="11" fill="#ff0000" />
<rect x="612" y="325" width="2" height="11" fill="#008686" />
<text x="591.5" y="335" class="m12 br" fill="#00ffff" textLength="12" lengthAdjust="spacingAndGlyphs" text-anchor="middle" >D1</text>
<rect x="635" y="325" width="2" height="11" fill="#008686" />
<text x="625" y="335" class="m12 br" fill="#00ffff" textLength="12" lengthAdjust="spacingAndGlyphs" text-anchor="middle" >D2</text>
<rect x="657" y="325" width="2" height="11" fill="#008686" />
<text x="647.5" y="335" class="m12 br" fill="#00ffff" textLength="12" lengthAdjust="spacingAndGlyphs" text-anchor="middle" >D3</text>
<rect x="659" y="325" width="42" height="11" fill="#ff0000" />
<rect x="701" y="325" width="2" height="11" fill="#008686" />
<text x="680.5" y="335" class="m12 br" fill="#00ffff" textLength="12" lengthAdjust="spacingAndGlyphs" text-anchor="middle" >D4</text>
<rect x="703" y="325" width="41" height="11" fill="#ff0000" />
<rect x="744" y="325" width="2" height="11" fill="#008686" />
<text x="724" y="335" class="m12 br" fill="#00ffff" textLength="12" lengthAdjust="spacingAndGlyphs" text-anchor="middle" >D5</text>
<rect x="767" y="325" width="2" height="11" fill="#008686" />
<text x="757" y="335" class="m12 br" fill="#00ffff" textLength="12" lengthAdjust="spacingAndGlyphs" text-anchor="middle" >D6</text>
<rect x="769" y="325" width="41" height="11" fill="#ff0000" />
<rect x="810" y="325" width="2" height="11" fill="#008686" />
<text x="790" y="335" class="m12 br" fill="#00ffff" textLength="12" lengthAdjust="spacingAndGlyphs" text-anchor="middle" >D7</text>
<rect x="810" y="312" width="2" height="25" fill="#008686" />
<text x="679.9" y="323" class="m12" fill="#00ffff" textLength="48" lengthAdjust="spacingAndGlyphs" text-anchor="middle" >Byte2:B2</text>
<rect x="812" y="325" width="41" height="11" fill="#ff0000" />
<rect x="853" y="325" width="2" height="11" fill="#008686" />
<text x="833" y="335" class="m12 br" fill="#00ffff" textLength="12" lengthAdjust="spacingAndGlyphs" text-anchor="middle" >D0</text>
<rect x="876" y="325" width="2" height="11" fill="#008686" />
<text x="866" y="335" class="m12 br" fill="#00ffff" textLength="12" lengthAdjust="spacingAndGlyphs" text-anchor="middle" >D1</text>
<rect x="878" y="325" width="42" height="11" fill="#ff0000" />
<rect x="920" y="325" width="2" height="11" fill="#008686" />
<text x="899.5" y="335" class="m12 br" fill="#00ffff" textLength="12" lengthAdjust="spacingAndGlyphs" text-anchor="middle" >D2</text>
<rect x="920" y="312" width="2" height="25" fill="#008686" />
<text x="818" y="323" class="m12" fill="#00ffff" textLength="48" lengthAdjust="spacingAndGlyphs" >Byte3:FD</text>
<polyline points="106.5,338 106.5,357.5 194.5,357.5 194.5,338.5 282.5,338.5 282.5,357.5 295.5,357.5 295.5,338.5 325.5,338.5 325.5,357.5 338.5,357.5 338.5,338.5 348.5,338.5 348.5,357.5 361.5,357.5 361.5,338.5 391.5,338.5 391.5,357.5 404.5,357.5 404.5,338.5 435.5,338.5 435.5,357.5 448.5,357.5 448.5,338.5 458.5,338.5 458.5,357.5 471.5,357.5 471.5,338.5 480.5,338.5 480.5,357.5 493.5,357.5 493.5,338.5 524.5,338.5 524.5,357.5 537.5,357.5 537.5,338.5 547.5,338.5 547.5,357.5 560.5,357.5 560.5,338.5 569.5,338.5 569.5,357.5 582.5,357.5 582.5,338.5 613.5,338.5 613.5,357.5 626.5,357.5 626.5,338.5 636.5,338.5 636.5,357.5 649.5,357.5 649.5,338.5 658.5,338.5 658.5,357.5 671.5,357.5 671.5,338.5 702.5,338.5 702.5,357.5 715.5,357.5 715.5,338.5 745.5,338.5 745.5,357.5 758.5,357.5 758.5,338.5 768.5,338.5 768.5,357.5 781.5,357.5 781.5,338.5 811.5,338.5 811.5,357.5 824.5,357.5 824.5,338.5 854.5,338.5 854.5,357.5 868.5,357.5 868.5,338.5 877.5,338.5 877.5,357.5 890.5,357.5 890.5,338.5 921.5,338.5" fill="none" stroke="#ffff00" stroke-width="1"/>
<text x="150.5" y="349" class="a10" fill="#00ffff" text-anchor="middle" >4.44</text>
<text x="238.5" y="349" class="a10" fill="#00ffff" text-anchor="middle" >4.39</text>
<text x="311.15" y="349" class="a10" fill="#00ffff" text-anchor="middle" >1.51</text>
<text x="377.3" y="349" class="a10" fill="#00ffff" text-anchor="middle" >1.51</text>
<text x="420.6" y="349" class="a10" fill="#00ffff" text-anchor="middle" >1.52</text>
<text x="509.6" y="349" class="a10" fill="#00ffff" text-anchor="middle" >1.52</text>
<text x="598.6" y="349" class="a10" fill="#00ffff" text-anchor="middle" >1.60</text>
<text x="687.6" y="349" class="a10" fill="#00ffff" text-anchor="middle" >1.52</text>
<text x="730.9" y="349" class="a10" fill="#00ffff" text-anchor="middle" >1.60</text>
<text x="797.05" y="349" class="a10" fill="#00ffff" text-anchor="middle" >1.60</text>
<text x="840.35" y="349" class="a10" fill="#00ffff" text-anchor="middle" >1.60</text>
<rect x="101" y="359" width="772" height="2" fill="#008686" />
<rect x="105" y="361" width="2" height="4" fill="#008686" />
<rect x="116" y="361" width="1" height="3" fill="#008686" />
<rect x="126" y="361" width="1" height="3" fill="#008686" />
<rect x="136" y="361" width="1" height="3" fill="#008686" />
<rect x="146" y="361" width="1" height="3" fill="#008686" />
<rect x="155" y="361" width="2" height="4" fill="#008686" />
<rect x="166" y="361" width="1" height="3" fill="#008686" />
<rect x="176" y="361" width="1" height="3" fill="#008686" />
<rect x="186" y="361" width="1" height="3" fill="#008686" />
<rect x="196" y="361" width="1" height="3" fill="#008686" />
<rect x="205" y="361" width="2" height="4" fill="#008686" />
<rect x="216" y="361" width="1" height="3" fill="#008686" />
<rect x="226" y="361" width="1" height="3" fill="#008686" />
<rect x="236" y="361" width="1" height="3" fill="#008686" />
<rect x="246" y="361" width="1" height="3" fill="#008686" />
<rect x="255" y="361" width="2" height="4" fill="#008686" />
<rect x="266" y="361" width="1" height="3" fill="#008686" />
<rect x="276" y="361" width="1" height="3" fill="#008686" />
<rect x="286" y="361" width="1" height="3" fill="#008686" />
<rect x="296" y="361" width="1" height="3" fill="#008686" />
<rect x="305" y="361" width="2" height="4" fill="#008686" />
<rect x="316" y="361" width="1" height="3" fill="#008686" />
<rect x="326" y="361" width="1" height="3" fill="#008686" />
<rect x="336" y="361" width="1" height="3" fill="#008686" />
<rect x="346" y="361" width="1" height="3" fill="#008686" />
<rect x="355" y="361" width="2" height="4" fill="#008686" />
<rect x="366" y="361" width="1" height="3" fill="#008686" />
<rect x="376" y="361" width="1" height="3" fill="#008686" />
<rect x="386" y="361" width="1" height="3" fill="#008686" />
<rect x="396" y="361" width="1" height="3" fill="#008686" />
<rect x="405" y="361" width="2" height="4" fill="#008686" />
<rect x="416" y="361" width="1" height="3" fill="#008686" />
<rect x="426" y="361" width="1" height="3" fill="#008686" />
<rect x="436" y="361" width="1" height="3" fill="#008686" />
<rect x="446" y="361" width="1" height="3" fill="#008686" />
<rect x="455" y="361" width="2" height="4" fill="#008686" />
<rect x="466" y="361" width="1" height="3" fill="#008686" />
<rect x="476" y="361" width="1" height="3" fill="#008686" />
<rect x="486" y="361" width="1" height="3" fill="#008686" />
<rect x="496" y="361" width="1" height="3" fill="#008686" />
<rect x="505" y="361" width="2" height="4" fill="#008686" />
<rect x="516" y="361" width="1" height="3" fill="#008686" />
<rect x="526" y="361" width="1" height="3" fill="#008686" />
<rect x="536" y="361" width="1" height="3" fill="#008686" />
<rect x="546" y="361" width="1" height="3" fill="#008686" />
<rect x="555" y="361" width="2" height="4" fill="#008686" />
<rect x="566" y="361" width="1" height="3" fill="#008686" />
<rect x="576" y="361" width="1" height="3" fill="#008686" />
<rect x="586" y="361" width="1" height="3" fill="#008686" />
<rect x="596" y="361" width="1" height="3" fill="#008686" />
<rect x="605" y="361" width="2" height="4" fill="#008686" />
<rect x="616" y="361" width="1" height="3" fill="#008686" />
<rect x="626" y="361" width="1" height="3" fill="#008686" />
<rect x="636" y="361" width="1" height="3" fill="#008686" />
<rect x="646" y="361" width="1" height="3" fill="#008686" />
<rect x="655" y="361" width="2" height="4" fill="#008686" />
<rect x="666" y="361" width="1" height="3" fill="#008686" />
<rect x="676" y="361" width="1" height="3" fill="#008686" />
<rect x="686" y="361" width="1" height="3" fill="#008686" />
<rect x="696" y="361" width="1" height="3" fill="#008686" />
<rect x="705" y="361" width="2" height="4" fill="#008686" />
<rect x="716" y="361" width="1" height="3" fill="#008686" />
<rect x="726" y="361" width="1" height="3" fill="#008686" />
<rect x="736" y="361" width="1" height="3" fill="#008686" />
<rect x="746" y="361" width="1" height="3" fill="#008686" />
<rect x="755" y="361" width="2" height="4" fill="#008686" />
<rect x="766" y="361" width="1" height="3" fill="#008686" />
<rect x="776" y="361" width="1" height="3" fill="#008686" />
<rect x="786" y="361" width="1" height="3" fill="#008686" />
<rect x="796" y="361" width="1" height="3" fill="#008686" />
<rect x="805" y="361" width="2" height="4" fill="#008686" />
<rect x="816" y="361" width="1" height="3" fill="#008686" />
<rect x="826" y="361" width="1" height="3" fill="#008686" />
<rect x="836" y="361" width="1" height="3" fill="#008686" />
<rect x="846" y="361" width="1" height="3" fill="#008686" />
<rect x="855" y="361" width="2" height="4" fill="#008686" />
<rect x="866" y="361" width="1" height="3" fill="#008686" />
<text x="106" y="373" class="m12" fill="#00ffff" textLength="6" lengthAdjust="spacingAndGlyphs" text-anchor="middle" >0</text>
<text x="156" y="373" class="m12" fill="#00ffff" textLength="30" lengthAdjust="spacingAndGlyphs" text-anchor="middle" >2.5ms</text>
<text x="206" y="373" class="m12" fill="#00ffff" textLength="18" lengthAdjust="spacingAndGlyphs" text-anchor="middle" >5ms</text>
<text x="256" y="373" class="m12" fill="#00ffff" textLength="30" lengthAdjust="spacingAndGlyphs" text-anchor="middle" >7.5ms</text>
<text x="306" y="373" class="m12" fill="#00ffff" textLength="24" lengthAdjust="spacingAndGlyphs" text-anchor="middle" >10ms</text>
<text x="356" y="373" class="m12" fill="#00ffff" textLength="36" lengthAdjust="spacingAndGlyphs" text-anchor="middle" >12.5ms</text>
<text x="406" y="373" class="m12" fill="#00ffff" textLength="24" lengthAdjust="spacingAndGlyphs" text-anchor="middle" >15ms</text>
<text x="456" y="373" class="m12" fill="#00ffff" textLength="36" lengthAdjust="spacingAndGlyphs" text-anchor="middle" >17.5ms</text>
<text x="506" y="373" class="m12" fill="#00ffff" textLength="24" lengthAdjust="spacingAndGlyphs" text-anchor="middle" >20ms</text>
<text x="556" y="373" class="m12" fill="#00ffff" textLength="36" lengthAdjust="spacingAndGlyphs" text-anchor="middle" >22.5ms</text>
<text x="606" y="373" class="m12" fill="#00ffff" textLength="24" lengthAdjust="spacingAndGlyphs" text-anchor="middle" >25ms</text>
<text x="656" y="373" class="m12" fill="#00ffff" textLength="36" lengthAdjust="spacingAndGlyphs" text-anchor="middle" >27.5ms</text>
<text x="706" y="373" class="m12" fill="#00ffff" textLength="24" lengthAdjust="spacingAndGlyphs" text-anchor="middle" >30ms</text>
<text x="756" y="373" class="m12" fill="#00ffff" textLength="36" lengthAdjust="spacingAndGlyphs" text-anchor="middle" >32.5ms</text>
<text x="806" y="373" class="m12" fill="#00ffff" textLength="24" lengthAdjust="spacingAndGlyphs" text-anchor="middle" >35ms</text>
<text x="856" y="373" class="m12" fill="#00ffff" textLength="36" lengthAdjust="spacingAndGlyphs" text-anchor="middle" >37.5ms</text>
</g>
<rect x="101" y="383" width="772" height="18" fill="#dcd8cf" />
<rect x="98" y="401" width="780" height="1" fill="#b9ae98" />
<rect x="101" y="384" width="15" height="17" fill="#f3f1ec" rx="2.5" stroke="#bdb9ae" stroke-width="1" style="shape-rendering:auto"/>
<path d="M110 388.8 L106.4 392.5 L110 396.2" stroke="#222" stroke-width="1.5" fill="none"/>
<rect x="116" y="384.5" width="200" height="16" fill="#7cc873" rx="2" stroke="#6aa864" stroke-width="1" style="shape-rendering:auto"/>
<rect x="117" y="385" width="198" height="7" fill="#9ad892" opacity="0.6"/>
<rect x="858.5" y="384" width="14" height="17" fill="#f3f1ec" rx="2.5" stroke="#bdb9ae" stroke-width="1" style="shape-rendering:auto"/>
<path d="M863.6 388.8 L867.2 392.5 L863.6 396.2" stroke="#222" stroke-width="1.5" fill="none"/>
<rect x="98" y="402" width="780" height="1" fill="#ffffff" />
<text x="107" y="431" class="hd" fill="#000" textLength="31" lengthAdjust="spacingAndGlyphs" >Name:</text>
<rect x="139" y="415" width="231" height="18" fill="#ffffff" />
<rect x="139" y="415" width="231" height="1" fill="#7f7c75" />
<rect x="139" y="415" width="1" height="18" fill="#7f7c75" />
<rect x="140" y="416" width="229" height="1" fill="#3f3d39" />
<rect x="140" y="416" width="1" height="16" fill="#3f3d39" />
<rect x="140" y="431" width="229" height="1" fill="#dbd8d1" />
<rect x="368" y="416" width="1" height="16" fill="#dbd8d1" />
<rect x="141" y="417" width="212" height="14" fill="url(#gH)" />
<rect x="141" y="417" width="212" height="14" fill="url(#gV)" />
<rect x="354" y="417" width="14" height="14" fill="#d9d6ce" />
<rect x="354" y="417" width="14" height="1" fill="#ffffff" />
<rect x="354" y="417" width="1" height="14" fill="#ffffff" />
<rect x="354" y="430" width="14" height="1" fill="#404040" />
<rect x="367" y="417" width="1" height="14" fill="#404040" />
<rect x="355" y="429" width="12" height="1" fill="#858279" />
<rect x="366" y="418" width="1" height="12" fill="#858279" />
<path d="M357.5 422.5 L364.5 422.5 L361 426.5 Z" fill="#000"/>
<text x="141.5" y="427" class="m12" fill="#000" textLength="78" lengthAdjust="spacingAndGlyphs" >21: TOSHIBA 1</text>
<path d="M340.5 424 L343.5 427.5 L351.5 419.5" stroke="#1414ee" stroke-width="2" fill="none"/>
<rect x="386.5" y="418.5" width="12" height="12" fill="url(#gChk)" stroke="#1c5180" stroke-width="1"/>
<path d="M389 424 L391.5 427 L396 421.5" stroke="#21a121" stroke-width="2" fill="none"/>
<text x="400.5" y="431" class="hd" fill="#000" textLength="58" lengthAdjust="spacingAndGlyphs" >Auto-search</text>
<rect x="386.5" y="438.5" width="12" height="12" fill="url(#gChk)" stroke="#1c5180" stroke-width="1"/>
<text x="400.5" y="450.5" class="hd" fill="#000" textLength="76" lengthAdjust="spacingAndGlyphs" >Show error time</text>
<rect x="490.5" y="438.5" width="12" height="12" fill="url(#gChk)" stroke="#1c5180" stroke-width="1"/>
<text x="503.5" y="450.5" class="hd" fill="#000" textLength="82" lengthAdjust="spacingAndGlyphs" >Send to IRTester</text>
<text x="530" y="431" class="hd" fill="#000" textLength="46" lengthAdjust="spacingAndGlyphs" >Modulus:</text>
<rect x="578" y="414" width="33" height="22" fill="#ffffff" />
<rect x="578" y="414" width="33" height="1" fill="#7f7c75" />
<rect x="578" y="414" width="1" height="22" fill="#7f7c75" />
<rect x="579" y="415" width="31" height="1" fill="#3f3d39" />
<rect x="579" y="415" width="1" height="20" fill="#3f3d39" />
<rect x="578" y="435" width="33" height="1" fill="#ffffff" />
<rect x="610" y="414" width="1" height="22" fill="#ffffff" />
<rect x="579" y="434" width="31" height="1" fill="#dbd8d1" />
<rect x="609" y="415" width="1" height="20" fill="#dbd8d1" />
<text x="581" y="429" class="hd" fill="#000" textLength="14" lengthAdjust="spacingAndGlyphs" >1.0</text>
<text x="107" y="463" class="hd" fill="#000" textLength="30" lengthAdjust="spacingAndGlyphs" >Result</text>
<rect x="138" y="455" width="472" height="101" fill="#ffffff" />
<rect x="138" y="455" width="472" height="1" fill="#7f7c75" />
<rect x="138" y="455" width="1" height="101" fill="#7f7c75" />
<rect x="139" y="456" width="470" height="1" fill="#3f3d39" />
<rect x="139" y="456" width="1" height="99" fill="#3f3d39" />
<rect x="138" y="555" width="472" height="1" fill="#ffffff" />
<rect x="609" y="455" width="1" height="101" fill="#ffffff" />
<rect x="139" y="554" width="470" height="1" fill="#dbd8d1" />
<rect x="608" y="456" width="1" height="99" fill="#dbd8d1" />
<rect x="140" y="457" width="453" height="97" fill="url(#gH)" />
<g clip-path="url(#cpRes)">
<rect x="140" y="457" width="453" height="12" fill="url(#gV)" />
<rect x="140" y="469" width="453" height="12" fill="url(#gV)" />
<rect x="140" y="481" width="453" height="12" fill="url(#gV)" />
<rect x="140" y="493" width="453" height="12" fill="url(#gV)" />
<rect x="140" y="505" width="453" height="12" fill="url(#gV)" />
<rect x="140" y="517" width="453" height="12" fill="url(#gV)" />
<rect x="140" y="529" width="453" height="12" fill="url(#gV)" />
<rect x="140" y="541" width="453" height="12" fill="url(#gV)" />
<text x="140.5" y="467.6" class="hd" fill="#000" textLength="278" lengthAdjust="spacingAndGlyphs" >TOSHIBA 1: 4D B2 FD 02 0D F2 - 4D B2 FD 02 0D F2</text>
<text x="140.5" y="479.6" class="hd" fill="#000" textLength="278" lengthAdjust="spacingAndGlyphs" >TOSHIBA 1: 4D B2 FD 02 0D F2 - 4D B2 FD 02 0D F2</text>
<text x="140.5" y="491.6" class="hd" fill="#000" textLength="278" lengthAdjust="spacingAndGlyphs" >TOSHIBA 1: 4D B2 FD 02 0D F2 - 4D B2 FD 02 0D F2</text>
<text x="140.5" y="503.6" class="hd" fill="#000" textLength="278" lengthAdjust="spacingAndGlyphs" >TOSHIBA 1: 4D B2 FD 02 0D F2 - 4D B2 FD 02 0D F2</text>
<text x="140.5" y="515.6" class="hd" fill="#000" textLength="278" lengthAdjust="spacingAndGlyphs" >TOSHIBA 1: 4D B2 FD 02 0D F2 - 4D B2 FD 02 0D F2</text>
<text x="140.5" y="527.6" class="hd" fill="#000" textLength="278" lengthAdjust="spacingAndGlyphs" >TOSHIBA 1: 4D B2 FD 02 0D F2 - 4D B2 FD 02 0D F2</text>
<text x="140.5" y="539.6" class="hd" fill="#000" textLength="278" lengthAdjust="spacingAndGlyphs" >TOSHIBA 1: 4D B2 FD 02 0D F2 - 4D B2 FD 02 0D F2</text>
<text x="140.5" y="551.6" class="hd" fill="#000" textLength="278" lengthAdjust="spacingAndGlyphs" >TOSHIBA 1: 4D B2 FD 02 0D F2 - 4D B2 FD 02 0D F2</text>
</g>
<rect x="593" y="457" width="15" height="97" fill="url(#pDither)" />
<rect x="593" y="457" width="15" height="14" fill="#d9d6ce" />
<rect x="593" y="457" width="15" height="1" fill="#ffffff" />
<rect x="593" y="457" width="1" height="14" fill="#ffffff" />
<rect x="593" y="470" width="15" height="1" fill="#404040" />
<rect x="607" y="457" width="1" height="14" fill="#404040" />
<rect x="594" y="469" width="13" height="1" fill="#858279" />
<rect x="606" y="458" width="1" height="12" fill="#858279" />
<path d="M597 465.5 L604 465.5 L600.5 461.5 Z" fill="#000"/>
<rect x="593" y="540" width="15" height="14" fill="#d9d6ce" />
<rect x="593" y="540" width="15" height="1" fill="#ffffff" />
<rect x="593" y="540" width="1" height="14" fill="#ffffff" />
<rect x="593" y="553" width="15" height="1" fill="#404040" />
<rect x="607" y="540" width="1" height="14" fill="#404040" />
<rect x="594" y="552" width="13" height="1" fill="#858279" />
<rect x="606" y="541" width="1" height="12" fill="#858279" />
<path d="M597 545.5 L604 545.5 L600.5 549.5 Z" fill="#000"/>
<rect x="593" y="514" width="15" height="22" fill="#d9d6ce" />
<rect x="593" y="514" width="15" height="1" fill="#ffffff" />
<rect x="593" y="514" width="1" height="22" fill="#ffffff" />
<rect x="593" y="535" width="15" height="1" fill="#404040" />
<rect x="607" y="514" width="1" height="22" fill="#404040" />
<rect x="594" y="534" width="13" height="1" fill="#858279" />
<rect x="606" y="515" width="1" height="20" fill="#858279" />
<text x="105.5" y="569.5" class="hd" fill="#000" textLength="17" lengthAdjust="spacingAndGlyphs" >div.</text>
<text x="174" y="570" class="m12" fill="#000" textLength="138" lengthAdjust="spacingAndGlyphs" >8 8 8 8 8 8 -8 8 8 8 8 8</text>
<rect x="617" y="402" width="1" height="189" fill="#8c8980" />
<rect x="618" y="402" width="1" height="189" fill="#ffffff" />
<rect x="619" y="402" width="1" height="189" fill="#dbd8d1" />
<rect x="621" y="414" width="120" height="20" fill="#ffffff" />
<rect x="621" y="414" width="120" height="1" fill="#7f7c75" />
<rect x="621" y="414" width="1" height="20" fill="#7f7c75" />
<rect x="622" y="415" width="118" height="1" fill="#3f3d39" />
<rect x="622" y="415" width="1" height="18" fill="#3f3d39" />
<rect x="621" y="433" width="120" height="1" fill="#ffffff" />
<rect x="740" y="414" width="1" height="20" fill="#ffffff" />
<rect x="622" y="432" width="118" height="1" fill="#dbd8d1" />
<rect x="739" y="415" width="1" height="18" fill="#dbd8d1" />
<rect x="724" y="416" width="15" height="16" fill="#d9d6ce" />
<rect x="724" y="416" width="15" height="1" fill="#ffffff" />
<rect x="724" y="416" width="1" height="16" fill="#ffffff" />
<rect x="724" y="431" width="15" height="1" fill="#404040" />
<rect x="738" y="416" width="1" height="16" fill="#404040" />
<rect x="725" y="430" width="13" height="1" fill="#858279" />
<rect x="737" y="417" width="1" height="14" fill="#858279" />
<path d="M728 422.5 L735 422.5 L731.5 426.5 Z" fill="#000"/>
<rect x="626.5" y="420.5" width="15" height="8" fill="#e9e7e1" stroke="#000" stroke-width="1"/>
<rect x="629" y="423" width="9" height="1" fill="#000" />
<rect x="629" y="425" width="9" height="1" fill="#000" />
<text x="645.5" y="430" class="cj" fill="#000" >e: [工作盘</text>
<text x="750" y="430" class="cj" fill="#000" >E:\...\新版</text>
<rect x="621" y="438" width="121" height="129" fill="#ffffff" />
<rect x="621" y="438" width="121" height="1" fill="#7f7c75" />
<rect x="621" y="438" width="1" height="129" fill="#7f7c75" />
<rect x="622" y="439" width="119" height="1" fill="#3f3d39" />
<rect x="622" y="439" width="1" height="127" fill="#3f3d39" />
<rect x="621" y="566" width="121" height="1" fill="#ffffff" />
<rect x="741" y="438" width="1" height="129" fill="#ffffff" />
<rect x="622" y="565" width="119" height="1" fill="#dbd8d1" />
<rect x="740" y="439" width="1" height="127" fill="#dbd8d1" />
<rect x="745" y="438" width="125" height="129" fill="#ffffff" />
<rect x="745" y="438" width="125" height="1" fill="#7f7c75" />
<rect x="745" y="438" width="1" height="129" fill="#7f7c75" />
<rect x="746" y="439" width="123" height="1" fill="#3f3d39" />
<rect x="746" y="439" width="1" height="127" fill="#3f3d39" />
<rect x="745" y="566" width="125" height="1" fill="#ffffff" />
<rect x="869" y="438" width="1" height="129" fill="#ffffff" />
<rect x="746" y="565" width="123" height="1" fill="#dbd8d1" />
<rect x="868" y="439" width="1" height="127" fill="#dbd8d1" />
<rect x="623" y="488" width="117" height="16" fill="#0a246a" />
<g transform="translate(625,441.5)"><path d="M0.5 11.5 V2.5 L1.5 1.5 H5.5 L6.5 3 H12 V5" fill="#fffb9a" stroke="#000" stroke-width="1"/><path d="M0.5 11.5 L3.5 5 H15.5 L12.5 11.5 Z" fill="#fff68a" stroke="#000" stroke-width="1"/></g>
<text x="644.5" y="452" class="cj" fill="#000" textLength="14" lengthAdjust="spacingAndGlyphs" >E:\</text>
<g transform="translate(629,457.5)"><path d="M0.5 11.5 V2.5 L1.5 1.5 H5.5 L6.5 3 H12 V5" fill="#fffb9a" stroke="#000" stroke-width="1"/><path d="M0.5 11.5 L3.5 5 H15.5 L12.5 11.5 Z" fill="#fff68a" stroke="#000" stroke-width="1"/></g>
<text x="648.5" y="468" class="cj" fill="#000" textLength="22" lengthAdjust="spacingAndGlyphs" >prog</text>
<g transform="translate(633.5,473.5)"><path d="M0.5 11.5 V2.5 L1.5 1.5 H5.5 L6.5 3 H12 V5" fill="#fffb9a" stroke="#000" stroke-width="1"/><path d="M0.5 11.5 L3.5 5 H15.5 L12.5 11.5 Z" fill="#fff68a" stroke="#000" stroke-width="1"/></g>
<text x="653" y="484" class="cj" fill="#000" textLength="56.5" lengthAdjust="spacingAndGlyphs" >IRReader80</text>
<g transform="translate(637.5,489.5)"><path d="M0.5 11.5 V2.5 L1.5 1.5 H5.5 L6.5 3 H12 V5" fill="#fffb9a" stroke="#000" stroke-width="1"/><path d="M0.5 11.5 L3.5 5 H15.5 L12.5 11.5 Z" fill="#fff68a" stroke="#000" stroke-width="1"/></g>
<text x="657" y="500" class="cj" fill="#fff" textLength="24" lengthAdjust="spacingAndGlyphs" >新版</text>
<g transform="translate(641.5,505.5)"><path d="M0.5 11.5 V2 L1.5 1 H5.5 L6.5 2.5 H13 L13.5 3.5 V11.5 Z" fill="#fff68a" stroke="#000" stroke-width="1"/></g>
<text x="661" y="516" class="cj" fill="#000" textLength="20" lengthAdjust="spacingAndGlyphs" >data</text>
<g transform="translate(641.5,521.5)"><path d="M0.5 11.5 V2 L1.5 1 H5.5 L6.5 2.5 H13 L13.5 3.5 V11.5 Z" fill="#fff68a" stroke="#000" stroke-width="1"/></g>
<text x="661" y="532" class="cj" fill="#000" textLength="46" lengthAdjust="spacingAndGlyphs" >new_help</text>
<g transform="translate(641.5,537.5)"><path d="M0.5 11.5 V2 L1.5 1 H5.5 L6.5 2.5 H13 L13.5 3.5 V11.5 Z" fill="#fff68a" stroke="#000" stroke-width="1"/></g>
<text x="661" y="548" class="cj" fill="#000" textLength="19" lengthAdjust="spacingAndGlyphs" >tool</text>
<rect x="99" y="572" width="518" height="19" fill="url(#pDither)" />
<rect x="99" y="572" width="518" height="1" fill="#111" />
<path d="M106 572.5 L110.5 587.5 L197.5 587.5 L202 572.5" fill="#ffffff" stroke="#111" stroke-width="1"/>
<path d="M286.5 572.5 L291 587.5 L330 587.5 L334.5 572.5" fill="#ffffff" stroke="#111" stroke-width="1"/>
<path d="M331.5 572.5 L336 587.5 L428.5 587.5 L433 572.5" fill="#ffffff" stroke="#111" stroke-width="1"/>
<path d="M430 572.5 L434.5 587.5 L479.5 587.5 L484 572.5" fill="#ffffff" stroke="#111" stroke-width="1"/>
<path d="M481 572.5 L485.5 587.5 L524.5 587.5 L529 572.5" fill="#ffffff" stroke="#111" stroke-width="1"/>
<path d="M526 572.5 L530.5 587.5 L575.5 587.5 L580 572.5" fill="#ffffff" stroke="#111" stroke-width="1"/>
<path d="M199 572.5 L203.5 587.5 L285 587.5 L289.5 572.5" fill="#dbd8d1" stroke="#111" stroke-width="1"/>
<rect x="200" y="572" width="88.5" height="1" fill="#dbd8d1" />
<text x="112" y="584" class="m12" fill="#000" textLength="84" lengthAdjust="spacingAndGlyphs" >General remote</text>
<text x="205.25" y="584" class="m12" fill="#000" textLength="78" lengthAdjust="spacingAndGlyphs" >Air-condition</text>
<text x="292.5" y="584" class="m12" fill="#000" textLength="36" lengthAdjust="spacingAndGlyphs" >Custom</text>
<text x="337.25" y="584" class="m12" fill="#000" textLength="90" lengthAdjust="spacingAndGlyphs" >Custom settings</text>
<text x="436" y="584" class="m12" fill="#000" textLength="42" lengthAdjust="spacingAndGlyphs" >Options</text>
<text x="487" y="584" class="m12" fill="#000" textLength="36" lengthAdjust="spacingAndGlyphs" >Others</text>
<text x="532" y="584" class="m12" fill="#000" textLength="42" lengthAdjust="spacingAndGlyphs" >Upgrade</text>
<rect x="620" y="572" width="238" height="19" fill="url(#pDither)" />
<rect x="620" y="572" width="238" height="1" fill="#111" />
<path d="M628.5 572.5 L633 587.5 L678 587.5 L682.5 572.5" fill="#ffffff" stroke="#111" stroke-width="1"/>
<path d="M713 572.5 L717.5 587.5 L775 587.5 L779.5 572.5" fill="#ffffff" stroke="#111" stroke-width="1"/>
<path d="M776.5 572.5 L781 587.5 L808 587.5 L812.5 572.5" fill="#ffffff" stroke="#111" stroke-width="1"/>
<path d="M679.5 572.5 L684 587.5 L711.5 587.5 L716 572.5" fill="#dbd8d1" stroke="#111" stroke-width="1"/>
<rect x="680.5" y="572" width="34.5" height="1" fill="#dbd8d1" />
<text x="634.5" y="584" class="m12" fill="#000" textLength="42" lengthAdjust="spacingAndGlyphs" >History</text>
<text x="685.75" y="584" class="m12" fill="#000" textLength="24" lengthAdjust="spacingAndGlyphs" >Disk</text>
<text x="719.25" y="584" class="m12" fill="#000" textLength="54" lengthAdjust="spacingAndGlyphs" >Favorites</text>
<text x="782.5" y="584" class="m12" fill="#000" textLength="24" lengthAdjust="spacingAndGlyphs" >File</text>
<rect x="858" y="572" width="1" height="19" fill="#9a968e" />
<rect x="859" y="572" width="19" height="19" fill="#dbd8d1" />
<circle cx="867.5" cy="581" r="8" fill="#10e810" stroke="#0a6a0a" stroke-width="1"/>
<text x="867.5" y="585.3" class="usb" fill="#000" textLength="12.5" lengthAdjust="spacingAndGlyphs" text-anchor="middle" >USB</text>
<rect x="138" y="188" width="233" height="226" fill="#000000" />
<rect x="139" y="189" width="215" height="224" fill="url(#gH)" />
<rect x="139" y="189" width="215" height="14" fill="url(#gSel)" />
<text x="139.5" y="199" class="m12" fill="#000" textLength="78" lengthAdjust="spacingAndGlyphs" >21: TOSHIBA 1</text>
<rect x="139" y="203" width="215" height="14" fill="url(#gV)" />
<text x="139.5" y="213" class="m12" fill="#000" textLength="78" lengthAdjust="spacingAndGlyphs" >22: TOSHIBA 2</text>
<rect x="139" y="217" width="215" height="14" fill="url(#gV)" />
<text x="139.5" y="227" class="m12" fill="#000" textLength="78" lengthAdjust="spacingAndGlyphs" >23: TOSHIBA 3</text>
<rect x="139" y="231" width="215" height="14" fill="url(#gV)" />
<text x="139.5" y="241" class="m12" fill="#000" textLength="78" lengthAdjust="spacingAndGlyphs" >24: FUJITSU 1</text>
<rect x="139" y="245" width="215" height="14" fill="url(#gV)" />
<text x="139.5" y="255" class="m12" fill="#000" textLength="78" lengthAdjust="spacingAndGlyphs" >25: FUJITSU 2</text>
<rect x="139" y="259" width="215" height="14" fill="url(#gV)" />
<text x="139.5" y="269" class="m12" fill="#000" textLength="78" lengthAdjust="spacingAndGlyphs" >26: FUJITSU 3</text>
<rect x="139" y="273" width="215" height="14" fill="url(#gV)" />
<text x="139.5" y="283" class="m12" fill="#000" textLength="78" lengthAdjust="spacingAndGlyphs" >27: FUJITSU 4</text>
<rect x="139" y="287" width="215" height="14" fill="url(#gV)" />
<text x="139.5" y="297" class="m12" fill="#000" textLength="78" lengthAdjust="spacingAndGlyphs" >28: FUJITSU 5</text>
<rect x="139" y="301" width="215" height="14" fill="url(#gV)" />
<text x="139.5" y="311" class="m12" fill="#000" textLength="78" lengthAdjust="spacingAndGlyphs" >29: CARRIER 1</text>
<rect x="139" y="315" width="215" height="14" fill="url(#gV)" />
<text x="139.5" y="325" class="m12" fill="#000" textLength="78" lengthAdjust="spacingAndGlyphs" >30: CARRIER 2</text>
<rect x="139" y="329" width="215" height="14" fill="url(#gV)" />
<text x="139.5" y="339" class="m12" fill="#000" textLength="78" lengthAdjust="spacingAndGlyphs" >31: CARRIER 3</text>
<rect x="139" y="343" width="215" height="14" fill="url(#gV)" />
<text x="139.5" y="353" class="m12" fill="#000" textLength="60" lengthAdjust="spacingAndGlyphs" >32: MCQUAY</text>
<rect x="139" y="357" width="215" height="14" fill="url(#gV)" />
<text x="139.5" y="367" class="m12" fill="#000" textLength="78" lengthAdjust="spacingAndGlyphs" >33: HITACHI 1</text>
<rect x="139" y="371" width="215" height="14" fill="url(#gV)" />
<text x="139.5" y="381" class="m12" fill="#000" textLength="78" lengthAdjust="spacingAndGlyphs" >34: HITACHI 2</text>
<rect x="139" y="385" width="215" height="14" fill="url(#gV)" />
<text x="139.5" y="395" class="m12" fill="#000" textLength="78" lengthAdjust="spacingAndGlyphs" >35: HITACHI 3</text>
<rect x="139" y="399" width="215" height="14" fill="url(#gV)" />
<text x="139.5" y="409" class="m12" fill="#000" textLength="78" lengthAdjust="spacingAndGlyphs" >36: HITACHI 4</text>
<path d="M341.5 196 L344.5 199.5 L352.5 191.5" stroke="#1414ee" stroke-width="2" fill="none"/>
<rect x="354" y="189" width="16" height="224" fill="url(#pDither)" />
<rect x="354" y="189" width="16" height="15" fill="#d9d6ce" />
<rect x="354" y="189" width="16" height="1" fill="#ffffff" />
<rect x="354" y="189" width="1" height="15" fill="#ffffff" />
<rect x="354" y="203" width="16" height="1" fill="#404040" />
<rect x="369" y="189" width="1" height="15" fill="#404040" />
<rect x="355" y="202" width="14" height="1" fill="#858279" />
<rect x="368" y="190" width="1" height="13" fill="#858279" />
<path d="M358.5 198 L365.5 198 L362 194 Z" fill="#000"/>
<rect x="354" y="398" width="16" height="15" fill="#d9d6ce" />
<rect x="354" y="398" width="16" height="1" fill="#ffffff" />
<rect x="354" y="398" width="1" height="15" fill="#ffffff" />
<rect x="354" y="412" width="16" height="1" fill="#404040" />
<rect x="369" y="398" width="1" height="15" fill="#404040" />
<rect x="355" y="411" width="14" height="1" fill="#858279" />
<rect x="368" y="399" width="1" height="13" fill="#858279" />
<path d="M358.5 404 L365.5 404 L362 408 Z" fill="#000"/>
<rect x="354" y="225" width="16" height="13" fill="#d9d6ce" />
<rect x="354" y="225" width="16" height="1" fill="#ffffff" />
<rect x="354" y="225" width="1" height="13" fill="#ffffff" />
<rect x="354" y="237" width="16" height="1" fill="#404040" />
<rect x="369" y="225" width="1" height="13" fill="#404040" />
<rect x="355" y="236" width="14" height="1" fill="#858279" />
<rect x="368" y="226" width="1" height="11" fill="#858279" />
<path d="M27 173.5 H117 A21 21 0 0 1 138 194.5 V267 A21 21 0 0 1 117 288 H117 L161.5 316.5 L84 288 H27 A21 21 0 0 1 6 267 V194.5 A21 21 0 0 1 27 173.5 Z" fill="#fffffd" stroke="#35923a" stroke-width="1.05" stroke-linejoin="round"/>
<text x="20" y="199" class="co" fill="#ff0000" textLength="102" lengthAdjust="spacingAndGlyphs" >Auto recognize up</text>
<text x="20" y="219.3" class="co" fill="#ff0000" >to</text>
<text x="42" y="219.3" class="co" fill="#ff0000" >200</text>
<text x="72.5" y="219.3" class="co" fill="#ff0000" >kinds</text>
<text x="112.5" y="219.3" class="co" fill="#ff0000" >of</text>
<text x="20" y="239.6" class="co" fill="#ff0000" textLength="71" lengthAdjust="spacingAndGlyphs" >air-condition</text>
<text x="20" y="259.9" class="co" fill="#ff0000" textLength="45" lengthAdjust="spacingAndGlyphs" >formats.</text>
<path d="M699 267.5 H837 A21 21 0 0 1 858 288.5 V349 A21 21 0 0 1 837 370 H753.5 L689.3 450.7 L708 370 H699 A21 21 0 0 1 678 349 V288.5 A21 21 0 0 1 699 267.5 Z" fill="#fffffd" stroke="#35923a" stroke-width="1.05" stroke-linejoin="round"/>
<text x="694" y="291.5" class="co" fill="#ff0000" textLength="149" lengthAdjust="spacingAndGlyphs" >Easy to browse waveform</text>
<path d="M694 294 L696 295.5 L698 294 L700 295.5 L702 294 L704 295.5 L706 294 L708 295.5 L710 294 L712 295.5 L714 294 L716 295.5 L718 294 L720 295.5 L722 294 L724 295.5 L726 294 L728 295.5 L730 294 L732 295.5 L734 294 L736 295.5 L738 294 L740 295.5 L742 294 L744 295.5 L746 294 L748 295.5 L750 294 L752 295.5 L754 294 L756 295.5 L758 294 L760 295.5 L762 294 L764 295.5 L766 294 L768 295.5 L770 294 L772 295.5 L774 294 L776 295.5 L778 294 L780 295.5 L782 294 L784 295.5 L786 294 L788 295.5 L790 294 L792 295.5 L794 294 L796 295.5 L798 294 L800 295.5 L802 294 L804 295.5 L806 294 L808 295.5 L810 294 L812 295.5 L814 294 L816 295.5 L818 294 L820 295.5 L822 294 L824 295.5 L826 294 L828 295.5 L830 294 L832 295.5 L834 294 L836 295.5 L838 294 L840 295.5 L842 294 L844 295.5" fill="none" stroke="#2a9a2a" stroke-width="0.9"/>
<text x="694" y="312.5" class="co" fill="#ff0000" textLength="65" lengthAdjust="spacingAndGlyphs" >on the disk.</text>
<path d="M694 315 L696 316.5 L698 315 L700 316.5 L702 315 L704 316.5 L706 315 L708 316.5 L710 315 L712 316.5 L714 315 L716 316.5 L718 315 L720 316.5 L722 315 L724 316.5 L726 315 L728 316.5 L730 315 L732 316.5 L734 315 L736 316.5 L738 315 L740 316.5 L742 315 L744 316.5 L746 315 L748 316.5 L750 315 L752 316.5 L754 315 L756 316.5 L758 315 L760 316.5" fill="none" stroke="#2a9a2a" stroke-width="0.9"/>
<path d="M386 475.5 H526 A20 13 0 0 1 546 488.5 V524.5 A20 13 0 0 1 526 537.5 H440.5 L326.3 564.7 L396 537.5 H386 A20 13 0 0 1 366 524.5 V488.5 A20 13 0 0 1 386 475.5 Z" fill="#fffffd" stroke="#35923a" stroke-width="1.05" stroke-linejoin="round"/>
<text x="382" y="497.5" class="co" fill="#ff0000" >Partition:</text>
<text x="438" y="497.5" class="co" fill="#ff0000" >how</text>
<text x="470.5" y="497.5" class="co" fill="#ff0000" >many</text>
<text x="509" y="497.5" class="co" fill="#ff0000" >bits</text>
<text x="382" y="518.5" class="co" fill="#ff0000" textLength="67" lengthAdjust="spacingAndGlyphs" >in a section.</text>
</svg>
</body></html>
